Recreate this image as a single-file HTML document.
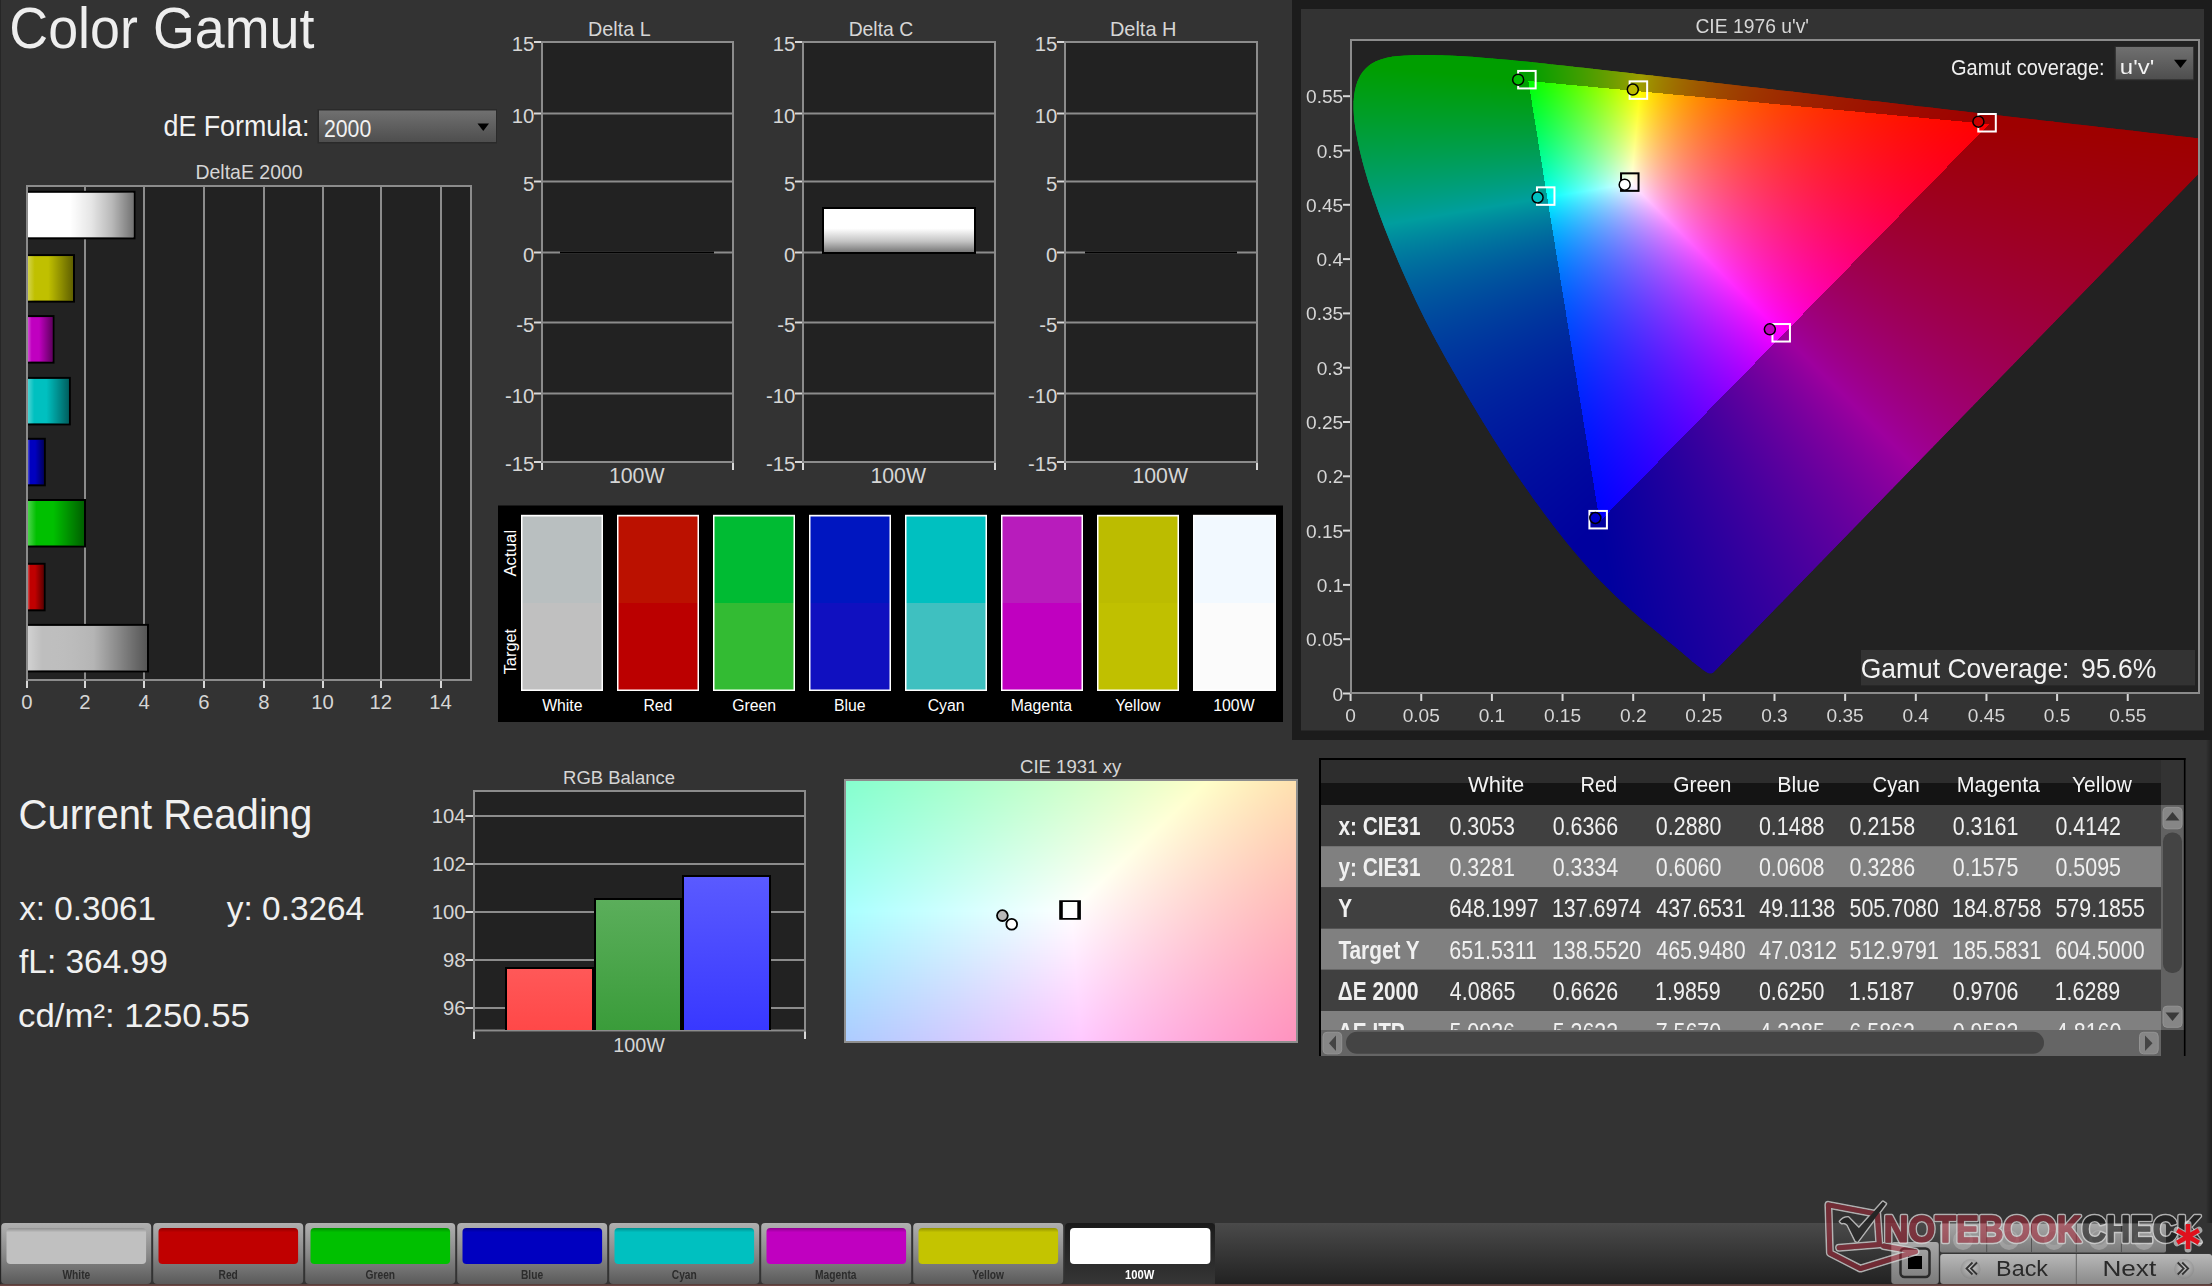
<!DOCTYPE html>
<html><head><meta charset="utf-8"><title>Color Gamut</title>
<style>
html,body{margin:0;padding:0;background:#333333;width:2212px;height:1286px;overflow:hidden}
svg{position:absolute;left:0;top:0}
text{font-family:"Liberation Sans",sans-serif}
canvas{position:absolute}
#cuv{left:1352px;top:41px}
#cxy{left:846px;top:781px}
</style></head><body>
<svg width="2212" height="1286" viewBox="0 0 2212 1286" style="z-index:1">
<defs>
<linearGradient id="gDrop" x1="0" y1="0" x2="0" y2="1"><stop offset="0" stop-color="#707070"/><stop offset="1" stop-color="#4e4e4e"/></linearGradient>
<linearGradient id="gBarW" x1="0" y1="0" x2="1" y2="0"><stop offset="0" stop-color="#000" stop-opacity="0"/><stop offset="0.4" stop-color="#000" stop-opacity="0"/><stop offset="0.6" stop-color="#000" stop-opacity="0.1"/><stop offset="0.8" stop-color="#000" stop-opacity="0.28"/><stop offset="1" stop-color="#000" stop-opacity="0.55"/></linearGradient>
<linearGradient id="gBarC" x1="0" y1="0" x2="1" y2="0"><stop offset="0" stop-color="#fff" stop-opacity="0.3"/><stop offset="0.15" stop-color="#fff" stop-opacity="0"/><stop offset="0.45" stop-color="#000" stop-opacity="0"/><stop offset="1" stop-color="#000" stop-opacity="0.5"/></linearGradient>
<linearGradient id="gBarG" x1="0" y1="0" x2="1" y2="0"><stop offset="0" stop-color="#fff" stop-opacity="0.3"/><stop offset="0.12" stop-color="#fff" stop-opacity="0"/><stop offset="0.55" stop-color="#000" stop-opacity="0.05"/><stop offset="1" stop-color="#000" stop-opacity="0.55"/></linearGradient>
<linearGradient id="gBarV" x1="0" y1="0" x2="0" y2="1"><stop offset="0" stop-color="#ffffff"/><stop offset="0.45" stop-color="#ffffff"/><stop offset="0.75" stop-color="#c4c4c4"/><stop offset="1" stop-color="#787878"/></linearGradient>
<linearGradient id="gRed" x1="0" y1="0" x2="0" y2="1"><stop offset="0" stop-color="#ff5858"/><stop offset="1" stop-color="#ff4848"/></linearGradient>
<linearGradient id="gGreen" x1="0" y1="0" x2="0" y2="1"><stop offset="0" stop-color="#5bae5b"/><stop offset="1" stop-color="#3a9c3a"/></linearGradient>
<linearGradient id="gBlue" x1="0" y1="0" x2="0" y2="1"><stop offset="0" stop-color="#5a5aff"/><stop offset="1" stop-color="#3838ff"/></linearGradient>
<linearGradient id="gBtn" x1="0" y1="0" x2="0" y2="1"><stop offset="0" stop-color="#b0b0b0"/><stop offset="0.5" stop-color="#8a8a8a"/><stop offset="1" stop-color="#5a5a5a"/></linearGradient>
<linearGradient id="gBtnSel" x1="0" y1="0" x2="0" y2="1"><stop offset="0" stop-color="#1a1a1a"/><stop offset="1" stop-color="#363636"/></linearGradient>
<linearGradient id="gSwIn" x1="0" y1="0" x2="0" y2="1"><stop offset="0" stop-color="#000" stop-opacity="0.25"/><stop offset="0.12" stop-color="#000" stop-opacity="0"/><stop offset="1" stop-color="#000" stop-opacity="0"/></linearGradient>
<linearGradient id="gTool" x1="0" y1="0" x2="0" y2="1"><stop offset="0" stop-color="#4a4a4a"/><stop offset="1" stop-color="#222222"/></linearGradient>
<linearGradient id="gBtn2" x1="0" y1="0" x2="0" y2="1"><stop offset="0" stop-color="#a8a8a8"/><stop offset="1" stop-color="#7a7a7a"/></linearGradient>
<linearGradient id="gBtn3" x1="0" y1="0" x2="0" y2="1"><stop offset="0" stop-color="#b8b8b8"/><stop offset="1" stop-color="#8a8a8a"/></linearGradient>
<linearGradient id="gEdge" x1="0" y1="0" x2="1" y2="0"><stop offset="0" stop-color="#000" stop-opacity="0"/><stop offset="1" stop-color="#000" stop-opacity="0.4"/></linearGradient>
<radialGradient id="gCirc" cx="0.5" cy="0.4" r="0.6"><stop offset="0" stop-color="#c8c8c8"/><stop offset="1" stop-color="#8a8a8a"/></radialGradient>
</defs>
<rect x="0" y="0" width="1" height="1286" fill="#262626"/>
<text x="9.31" y="48.00" font-size="56.52" fill="#eeeeee" textLength="305.15" lengthAdjust="spacingAndGlyphs" >Color Gamut</text>
<text x="163.53" y="136.00" font-size="28.99" fill="#f2f2f2" textLength="145.92" lengthAdjust="spacingAndGlyphs" >dE Formula:</text>
<rect x="317.50" y="109.00" width="179.50" height="34.50" fill="#2a2a2a" />
<rect x="319" y="110.5" width="177" height="31.5" fill="url(#gDrop)"/>
<text x="323.94" y="136.60" font-size="23.19" fill="#f2f2f2" textLength="47.30" lengthAdjust="spacingAndGlyphs" >2000</text>
<path d="M477.5,123.5 L489,123.5 L483.25,131 Z" fill="#000"/>
<text x="195.44" y="179.00" font-size="20.29" fill="#d6d6d6" textLength="107.22" lengthAdjust="spacingAndGlyphs" >DeltaE 2000</text>
<rect x="26.00" y="185.00" width="446.00" height="496.00" fill="#222222" />
<rect x="84.00" y="186.00" width="2.00" height="494.00" fill="#8c8c8c" />
<rect x="143.00" y="186.00" width="2.00" height="494.00" fill="#8c8c8c" />
<rect x="203.00" y="186.00" width="2.00" height="494.00" fill="#8c8c8c" />
<rect x="263.00" y="186.00" width="2.00" height="494.00" fill="#8c8c8c" />
<rect x="322.00" y="186.00" width="2.00" height="494.00" fill="#8c8c8c" />
<rect x="380.00" y="186.00" width="2.00" height="494.00" fill="#8c8c8c" />
<rect x="440.00" y="186.00" width="2.00" height="494.00" fill="#8c8c8c" />
<rect x="26.00" y="185.00" width="446.00" height="2.00" fill="#8c8c8c" />
<rect x="26.00" y="185.00" width="2.00" height="496.00" fill="#8c8c8c" />
<rect x="470.00" y="185.00" width="2.00" height="496.00" fill="#8c8c8c" />
<rect x="26.00" y="679.00" width="446.00" height="2.00" fill="#8c8c8c" />
<rect x="26.00" y="681.00" width="2.00" height="7.00" fill="#d8d8d8" />
<text x="21.32" y="708.70" font-size="20.29" fill="#d6d6d6" >0</text>
<rect x="84.00" y="681.00" width="2.00" height="7.00" fill="#d8d8d8" />
<text x="79.37" y="708.70" font-size="20.29" fill="#d6d6d6" >2</text>
<rect x="143.00" y="681.00" width="2.00" height="7.00" fill="#d8d8d8" />
<text x="138.47" y="708.70" font-size="20.29" fill="#d6d6d6" >4</text>
<rect x="203.00" y="681.00" width="2.00" height="7.00" fill="#d8d8d8" />
<text x="198.27" y="708.70" font-size="20.29" fill="#d6d6d6" >6</text>
<rect x="263.00" y="681.00" width="2.00" height="7.00" fill="#d8d8d8" />
<text x="258.32" y="708.70" font-size="20.29" fill="#d6d6d6" >8</text>
<rect x="322.00" y="681.00" width="2.00" height="7.00" fill="#d8d8d8" />
<text x="311.33" y="708.70" font-size="20.29" fill="#d6d6d6" >10</text>
<rect x="380.00" y="681.00" width="2.00" height="7.00" fill="#d8d8d8" />
<text x="369.49" y="708.70" font-size="20.29" fill="#d6d6d6" >12</text>
<rect x="440.00" y="681.00" width="2.00" height="7.00" fill="#d8d8d8" />
<text x="429.28" y="708.70" font-size="20.29" fill="#d6d6d6" >14</text>
<rect x="28.00" y="190.80" width="107.50" height="48.50" fill="#000000" />
<rect x="28.00" y="192.80" width="105.50" height="44.50" fill="#ffffff" />
<rect x="28" y="192.80" width="105.50" height="44.5" fill="url(#gBarW)"/>
<rect x="28.00" y="254.10" width="47.00" height="48.50" fill="#000000" />
<rect x="28.00" y="256.10" width="45.00" height="44.50" fill="#c0c000" />
<rect x="28" y="256.10" width="45.00" height="44.5" fill="url(#gBarC)"/>
<rect x="28.00" y="315.10" width="26.50" height="48.50" fill="#000000" />
<rect x="28.00" y="317.10" width="24.50" height="44.50" fill="#c000c0" />
<rect x="28" y="317.10" width="24.50" height="44.5" fill="url(#gBarC)"/>
<rect x="28.00" y="376.90" width="42.80" height="48.50" fill="#000000" />
<rect x="28.00" y="378.90" width="40.80" height="44.50" fill="#00c0c0" />
<rect x="28" y="378.90" width="40.80" height="44.5" fill="url(#gBarC)"/>
<rect x="28.00" y="437.80" width="17.80" height="48.50" fill="#000000" />
<rect x="28.00" y="439.80" width="15.80" height="44.50" fill="#0000c0" />
<rect x="28" y="439.80" width="15.80" height="44.5" fill="url(#gBarC)"/>
<rect x="28.00" y="499.00" width="58.00" height="48.50" fill="#000000" />
<rect x="28.00" y="501.00" width="56.00" height="44.50" fill="#00c000" />
<rect x="28" y="501.00" width="56.00" height="44.5" fill="url(#gBarC)"/>
<rect x="28.00" y="562.80" width="17.60" height="48.50" fill="#000000" />
<rect x="28.00" y="564.80" width="15.60" height="44.50" fill="#c00000" />
<rect x="28" y="564.80" width="15.60" height="44.5" fill="url(#gBarC)"/>
<rect x="28.00" y="623.90" width="121.00" height="48.50" fill="#000000" />
<rect x="28.00" y="625.90" width="119.00" height="44.50" fill="#bebebe" />
<rect x="28" y="625.90" width="119.00" height="44.5" fill="url(#gBarG)"/>
<rect x="541.00" y="41.00" width="193.00" height="422.00" fill="#222222" />
<rect x="542.00" y="112.50" width="191.00" height="2.00" fill="#8c8c8c" />
<rect x="542.00" y="180.50" width="191.00" height="2.00" fill="#8c8c8c" />
<rect x="542.00" y="251.50" width="191.00" height="2.00" fill="#8c8c8c" />
<rect x="542.00" y="321.50" width="191.00" height="2.00" fill="#8c8c8c" />
<rect x="542.00" y="392.50" width="191.00" height="2.00" fill="#8c8c8c" />
<rect x="541.00" y="41.00" width="193.00" height="2.00" fill="#8c8c8c" />
<rect x="541.00" y="461.00" width="193.00" height="2.00" fill="#8c8c8c" />
<rect x="541.00" y="41.00" width="2.00" height="422.00" fill="#8c8c8c" />
<rect x="732.00" y="41.00" width="2.00" height="422.00" fill="#8c8c8c" />
<rect x="534.00" y="41.00" width="7.00" height="2.00" fill="#d8d8d8" />
<text x="511.79" y="51.00" font-size="20.29" fill="#d6d6d6" >15</text>
<rect x="534.00" y="112.50" width="7.00" height="2.00" fill="#d8d8d8" />
<text x="511.69" y="122.50" font-size="20.29" fill="#d6d6d6" >10</text>
<rect x="534.00" y="180.50" width="7.00" height="2.00" fill="#d8d8d8" />
<text x="523.05" y="190.50" font-size="20.29" fill="#d6d6d6" >5</text>
<rect x="534.00" y="251.50" width="7.00" height="2.00" fill="#d8d8d8" />
<text x="522.95" y="261.50" font-size="20.29" fill="#d6d6d6" >0</text>
<rect x="534.00" y="321.50" width="7.00" height="2.00" fill="#d8d8d8" />
<text x="516.25" y="331.50" font-size="20.29" fill="#d6d6d6" >-5</text>
<rect x="534.00" y="392.50" width="7.00" height="2.00" fill="#d8d8d8" />
<text x="504.89" y="402.50" font-size="20.29" fill="#d6d6d6" >-10</text>
<rect x="534.00" y="461.00" width="7.00" height="2.00" fill="#d8d8d8" />
<text x="504.99" y="471.00" font-size="20.29" fill="#d6d6d6" >-15</text>
<rect x="541.00" y="463.00" width="2.00" height="7.00" fill="#d8d8d8" />
<rect x="732.00" y="463.00" width="2.00" height="7.00" fill="#d8d8d8" />
<text x="588.12" y="35.80" font-size="20.87" fill="#d6d6d6" textLength="62.54" lengthAdjust="spacingAndGlyphs" >Delta L</text>
<text x="608.90" y="483.00" font-size="21.30" fill="#d6d6d6" >100W</text>
<rect x="802.00" y="41.00" width="194.00" height="422.00" fill="#222222" />
<rect x="803.00" y="112.50" width="192.00" height="2.00" fill="#8c8c8c" />
<rect x="803.00" y="180.50" width="192.00" height="2.00" fill="#8c8c8c" />
<rect x="803.00" y="251.50" width="192.00" height="2.00" fill="#8c8c8c" />
<rect x="803.00" y="321.50" width="192.00" height="2.00" fill="#8c8c8c" />
<rect x="803.00" y="392.50" width="192.00" height="2.00" fill="#8c8c8c" />
<rect x="802.00" y="41.00" width="194.00" height="2.00" fill="#8c8c8c" />
<rect x="802.00" y="461.00" width="194.00" height="2.00" fill="#8c8c8c" />
<rect x="802.00" y="41.00" width="2.00" height="422.00" fill="#8c8c8c" />
<rect x="994.00" y="41.00" width="2.00" height="422.00" fill="#8c8c8c" />
<rect x="795.00" y="41.00" width="7.00" height="2.00" fill="#d8d8d8" />
<text x="772.79" y="51.00" font-size="20.29" fill="#d6d6d6" >15</text>
<rect x="795.00" y="112.50" width="7.00" height="2.00" fill="#d8d8d8" />
<text x="772.69" y="122.50" font-size="20.29" fill="#d6d6d6" >10</text>
<rect x="795.00" y="180.50" width="7.00" height="2.00" fill="#d8d8d8" />
<text x="784.05" y="190.50" font-size="20.29" fill="#d6d6d6" >5</text>
<rect x="795.00" y="251.50" width="7.00" height="2.00" fill="#d8d8d8" />
<text x="783.95" y="261.50" font-size="20.29" fill="#d6d6d6" >0</text>
<rect x="795.00" y="321.50" width="7.00" height="2.00" fill="#d8d8d8" />
<text x="777.25" y="331.50" font-size="20.29" fill="#d6d6d6" >-5</text>
<rect x="795.00" y="392.50" width="7.00" height="2.00" fill="#d8d8d8" />
<text x="765.89" y="402.50" font-size="20.29" fill="#d6d6d6" >-10</text>
<rect x="795.00" y="461.00" width="7.00" height="2.00" fill="#d8d8d8" />
<text x="765.99" y="471.00" font-size="20.29" fill="#d6d6d6" >-15</text>
<rect x="802.00" y="463.00" width="2.00" height="7.00" fill="#d8d8d8" />
<rect x="994.00" y="463.00" width="2.00" height="7.00" fill="#d8d8d8" />
<text x="848.65" y="35.80" font-size="20.87" fill="#d6d6d6" textLength="64.51" lengthAdjust="spacingAndGlyphs" >Delta C</text>
<text x="870.40" y="483.00" font-size="21.30" fill="#d6d6d6" >100W</text>
<rect x="1064.00" y="41.00" width="194.00" height="422.00" fill="#222222" />
<rect x="1065.00" y="112.50" width="192.00" height="2.00" fill="#8c8c8c" />
<rect x="1065.00" y="180.50" width="192.00" height="2.00" fill="#8c8c8c" />
<rect x="1065.00" y="251.50" width="192.00" height="2.00" fill="#8c8c8c" />
<rect x="1065.00" y="321.50" width="192.00" height="2.00" fill="#8c8c8c" />
<rect x="1065.00" y="392.50" width="192.00" height="2.00" fill="#8c8c8c" />
<rect x="1064.00" y="41.00" width="194.00" height="2.00" fill="#8c8c8c" />
<rect x="1064.00" y="461.00" width="194.00" height="2.00" fill="#8c8c8c" />
<rect x="1064.00" y="41.00" width="2.00" height="422.00" fill="#8c8c8c" />
<rect x="1256.00" y="41.00" width="2.00" height="422.00" fill="#8c8c8c" />
<rect x="1057.00" y="41.00" width="7.00" height="2.00" fill="#d8d8d8" />
<text x="1034.79" y="51.00" font-size="20.29" fill="#d6d6d6" >15</text>
<rect x="1057.00" y="112.50" width="7.00" height="2.00" fill="#d8d8d8" />
<text x="1034.69" y="122.50" font-size="20.29" fill="#d6d6d6" >10</text>
<rect x="1057.00" y="180.50" width="7.00" height="2.00" fill="#d8d8d8" />
<text x="1046.05" y="190.50" font-size="20.29" fill="#d6d6d6" >5</text>
<rect x="1057.00" y="251.50" width="7.00" height="2.00" fill="#d8d8d8" />
<text x="1045.95" y="261.50" font-size="20.29" fill="#d6d6d6" >0</text>
<rect x="1057.00" y="321.50" width="7.00" height="2.00" fill="#d8d8d8" />
<text x="1039.25" y="331.50" font-size="20.29" fill="#d6d6d6" >-5</text>
<rect x="1057.00" y="392.50" width="7.00" height="2.00" fill="#d8d8d8" />
<text x="1027.89" y="402.50" font-size="20.29" fill="#d6d6d6" >-10</text>
<rect x="1057.00" y="461.00" width="7.00" height="2.00" fill="#d8d8d8" />
<text x="1027.99" y="471.00" font-size="20.29" fill="#d6d6d6" >-15</text>
<rect x="1064.00" y="463.00" width="2.00" height="7.00" fill="#d8d8d8" />
<rect x="1256.00" y="463.00" width="2.00" height="7.00" fill="#d8d8d8" />
<text x="1109.90" y="35.80" font-size="20.87" fill="#d6d6d6" textLength="66.59" lengthAdjust="spacingAndGlyphs" >Delta H</text>
<text x="1132.40" y="483.00" font-size="21.30" fill="#d6d6d6" >100W</text>
<rect x="560.00" y="251.50" width="154.00" height="2.00" fill="#000" />
<rect x="1085.00" y="251.50" width="152.00" height="2.00" fill="#000" />
<rect x="822.00" y="207.00" width="154.00" height="47.00" fill="#000" />
<rect x="824" y="209" width="150" height="43" fill="url(#gBarV)"/>
<rect x="498.00" y="505.50" width="785.00" height="216.50" fill="#000000" />
<rect x="521.00" y="514.80" width="82.00" height="176.20" fill="#ffffff" />
<rect x="522.50" y="516.50" width="79.00" height="86.50" fill="#b9bfc0" />
<rect x="522.50" y="603.00" width="79.00" height="86.50" fill="#c0c0c0" />
<text x="542.14" y="710.70" font-size="15.80" fill="#ffffff" >White</text>
<rect x="617.00" y="514.80" width="82.00" height="176.20" fill="#ffffff" />
<rect x="618.50" y="516.50" width="79.00" height="86.50" fill="#bb1100" />
<rect x="618.50" y="603.00" width="79.00" height="86.50" fill="#bb0000" />
<text x="643.39" y="710.70" font-size="15.80" fill="#ffffff" >Red</text>
<rect x="713.00" y="514.80" width="82.00" height="176.20" fill="#ffffff" />
<rect x="714.50" y="516.50" width="79.00" height="86.50" fill="#00bb33" />
<rect x="714.50" y="603.00" width="79.00" height="86.50" fill="#33bb33" />
<text x="732.16" y="710.70" font-size="15.80" fill="#ffffff" >Green</text>
<rect x="809.00" y="514.80" width="82.00" height="176.20" fill="#ffffff" />
<rect x="810.50" y="516.50" width="79.00" height="86.50" fill="#0016c0" />
<rect x="810.50" y="603.00" width="79.00" height="86.50" fill="#1010c0" />
<text x="833.93" y="710.70" font-size="15.80" fill="#ffffff" >Blue</text>
<rect x="905.00" y="514.80" width="82.00" height="176.20" fill="#ffffff" />
<rect x="906.50" y="516.50" width="79.00" height="86.50" fill="#00c0c0" />
<rect x="906.50" y="603.00" width="79.00" height="86.50" fill="#3fc0c0" />
<text x="927.68" y="710.70" font-size="15.80" fill="#ffffff" >Cyan</text>
<rect x="1001.00" y="514.80" width="82.00" height="176.20" fill="#ffffff" />
<rect x="1002.50" y="516.50" width="79.00" height="86.50" fill="#b81cbc" />
<rect x="1002.50" y="603.00" width="79.00" height="86.50" fill="#c000c0" />
<text x="1010.64" y="710.70" font-size="15.80" fill="#ffffff" >Magenta</text>
<rect x="1097.00" y="514.80" width="82.00" height="176.20" fill="#ffffff" />
<rect x="1098.50" y="516.50" width="79.00" height="86.50" fill="#bcbc00" />
<rect x="1098.50" y="603.00" width="79.00" height="86.50" fill="#c0c000" />
<text x="1115.25" y="710.70" font-size="15.80" fill="#ffffff" >Yellow</text>
<rect x="1193.00" y="514.80" width="83.00" height="176.20" fill="#ffffff" />
<rect x="1194.50" y="516.50" width="80.00" height="86.50" fill="#f2f9ff" />
<rect x="1194.50" y="603.00" width="80.00" height="86.50" fill="#fbfbfb" />
<text x="1213.29" y="710.70" font-size="15.80" fill="#ffffff" >100W</text>
<g transform="translate(515.5,576.6) rotate(-90)"><text x="0.00" y="0.00" font-size="16.67" fill="#ffffff" textLength="46.77" lengthAdjust="spacingAndGlyphs" >Actual</text></g>
<g transform="translate(515.5,674) rotate(-90)"><text x="-0.33" y="0.00" font-size="16.67" fill="#ffffff" textLength="45.48" lengthAdjust="spacingAndGlyphs" >Target</text></g>
<rect x="1292.00" y="0.00" width="920.00" height="740.00" fill="#1c1c1c" />
<rect x="1301.00" y="9.00" width="903.00" height="721.50" fill="#333333" />
<rect x="1350.00" y="39.00" width="850.00" height="655.00" fill="#222222" />
<text x="18.60" y="829.00" font-size="42.03" fill="#f0f0f0" textLength="293.71" lengthAdjust="spacingAndGlyphs" >Current Reading</text>
<text x="19.17" y="920.00" font-size="32.46" fill="#f0f0f0" textLength="136.91" lengthAdjust="spacingAndGlyphs" >x: 0.3061</text>
<text x="226.83" y="920.00" font-size="32.46" fill="#f0f0f0" textLength="137.34" lengthAdjust="spacingAndGlyphs" >y: 0.3264</text>
<text x="19.00" y="973.40" font-size="32.46" fill="#f0f0f0" textLength="148.82" lengthAdjust="spacingAndGlyphs" >fL: 364.99</text>
<text x="18.11" y="1027.00" font-size="32.46" fill="#f0f0f0" textLength="231.70" lengthAdjust="spacingAndGlyphs" >cd/m²: 1250.55</text>
<rect x="473.00" y="790.00" width="333.00" height="241.50" fill="#222222" />
<rect x="474.00" y="815.00" width="331.00" height="2.00" fill="#8c8c8c" />
<rect x="465.50" y="815.00" width="8.50" height="2.00" fill="#d8d8d8" />
<text x="431.63" y="823.00" font-size="20.29" fill="#d6d6d6" >104</text>
<rect x="474.00" y="863.00" width="331.00" height="2.00" fill="#8c8c8c" />
<rect x="465.50" y="863.00" width="8.50" height="2.00" fill="#d8d8d8" />
<text x="432.03" y="871.00" font-size="20.29" fill="#d6d6d6" >102</text>
<rect x="474.00" y="911.00" width="331.00" height="2.00" fill="#8c8c8c" />
<rect x="465.50" y="911.00" width="8.50" height="2.00" fill="#d8d8d8" />
<text x="431.73" y="919.00" font-size="20.29" fill="#d6d6d6" >100</text>
<rect x="474.00" y="959.00" width="331.00" height="2.00" fill="#8c8c8c" />
<rect x="465.50" y="959.00" width="8.50" height="2.00" fill="#d8d8d8" />
<text x="443.09" y="967.00" font-size="20.29" fill="#d6d6d6" >98</text>
<rect x="474.00" y="1007.00" width="331.00" height="2.00" fill="#8c8c8c" />
<rect x="465.50" y="1007.00" width="8.50" height="2.00" fill="#d8d8d8" />
<text x="443.09" y="1015.00" font-size="20.29" fill="#d6d6d6" >96</text>
<rect x="473.00" y="790.00" width="333.00" height="2.00" fill="#8c8c8c" />
<rect x="473.00" y="790.00" width="2.00" height="241.50" fill="#8c8c8c" />
<rect x="804.00" y="790.00" width="2.00" height="241.50" fill="#8c8c8c" />
<rect x="473.00" y="1029.50" width="333.00" height="2.00" fill="#8c8c8c" />
<rect x="473.00" y="1031.50" width="2.00" height="7.50" fill="#d8d8d8" />
<rect x="804.00" y="1031.50" width="2.00" height="7.50" fill="#d8d8d8" />
<rect x="505.00" y="967.00" width="89.00" height="63.00" fill="#000" />
<rect x="507.00" y="969.00" width="85.00" height="61.00" fill="url(#gRed)"/>
<rect x="594.00" y="898.00" width="88.00" height="132.00" fill="#000" />
<rect x="596.00" y="900.00" width="84.00" height="130.00" fill="url(#gGreen)"/>
<rect x="682.00" y="875.00" width="89.00" height="155.00" fill="#000" />
<rect x="684.00" y="877.00" width="85.00" height="153.00" fill="url(#gBlue)"/>
<text x="563.12" y="783.80" font-size="19.28" fill="#d6d6d6" textLength="111.89" lengthAdjust="spacingAndGlyphs" >RGB Balance</text>
<text x="613.32" y="1051.50" font-size="19.57" fill="#d6d6d6" textLength="51.63" lengthAdjust="spacingAndGlyphs" >100W</text>
<text x="1019.97" y="772.90" font-size="18.84" fill="#d6d6d6" textLength="101.27" lengthAdjust="spacingAndGlyphs" >CIE 1931 xy</text>
<rect x="844.00" y="779.00" width="454.00" height="264.00" fill="#8e8e8e" />
<clipPath id="lclip"><rect x="1352" y="41" width="846" height="651"/></clipPath>
<clipPath id="lpath"><path d="M1713.2,672.5L1713.2,672.5L1713.1,672.5L1713.1,672.5L1713.0,672.5L1712.9,672.6L1712.9,672.7L1712.8,672.8L1712.7,672.9L1712.6,672.9L1712.5,672.9L1712.3,672.9L1712.2,672.9L1712.1,673.0L1712.0,673.1L1711.8,673.2L1711.7,673.2L1711.5,673.3L1711.3,673.3L1711.2,673.3L1711.0,673.2L1710.8,673.2L1710.5,673.2L1710.3,673.2L1710.0,673.3L1709.8,673.3L1709.5,673.3L1709.2,673.3L1708.9,673.3L1708.4,673.1L1708.0,672.9L1707.4,672.6L1706.8,672.2L1706.0,671.7L1705.1,671.2L1704.1,670.5L1703.1,669.8L1702.0,669.0L1700.9,668.1L1699.6,667.1L1698.2,666.0L1696.6,664.7L1694.9,663.4L1693.0,661.9L1691.1,660.2L1689.0,658.5L1686.8,656.6L1684.5,654.7L1682.1,652.6L1679.5,650.4L1676.8,648.2L1673.9,645.8L1670.7,643.2L1667.3,640.4L1663.7,637.4L1659.9,634.3L1655.9,631.0L1651.7,627.6L1647.3,624.0L1642.8,620.2L1637.9,616.0L1632.8,611.6L1627.5,606.8L1621.9,601.7L1615.9,596.2L1609.9,590.3L1603.6,584.1L1596.8,577.2L1589.5,569.3L1581.5,560.1L1572.9,550.1L1563.9,539.0L1554.5,527.0L1544.7,514.0L1534.4,499.9L1523.8,485.0L1513.1,469.2L1502.1,452.3L1490.8,434.4L1479.4,415.9L1468.2,397.2L1457.1,378.1L1445.9,358.5L1435.1,338.7L1425.0,319.4L1415.7,300.2L1406.9,281.1L1398.7,262.4L1391.3,244.7L1384.5,227.7L1378.4,211.4L1373.0,196.0L1368.3,181.7L1364.4,168.5L1361.2,156.4L1358.6,145.2L1356.5,134.8L1355.0,125.5L1354.0,117.0L1353.6,109.4L1353.6,102.3L1354.1,95.7L1355.0,89.9L1356.4,84.6L1358.1,79.9L1360.3,75.6L1362.8,71.8L1365.7,68.5L1368.9,65.6L1372.3,63.2L1376.1,61.3L1380.0,59.7L1384.2,58.4L1388.4,57.4L1392.9,56.6L1397.6,56.1L1402.3,55.7L1407.1,55.4L1412.1,55.2L1417.1,55.1L1422.1,55.0L1427.1,55.0L1432.1,55.1L1437.1,55.2L1442.2,55.3L1447.3,55.5L1452.5,55.7L1457.8,56.0L1463.2,56.3L1468.7,56.6L1474.2,57.0L1479.9,57.4L1485.8,57.9L1491.7,58.4L1497.8,58.9L1504.0,59.5L1510.3,60.1L1516.8,60.8L1523.5,61.4L1530.3,62.1L1537.3,62.8L1544.5,63.6L1551.9,64.4L1559.4,65.2L1567.2,66.1L1575.2,66.9L1583.3,67.8L1591.7,68.8L1600.3,69.7L1609.1,70.7L1618.1,71.8L1627.4,72.8L1636.9,73.9L1646.6,75.0L1656.6,76.1L1666.7,77.3L1677.1,78.5L1687.8,79.7L1698.6,81.0L1709.7,82.2L1721.0,83.5L1732.6,84.9L1744.3,86.2L1756.3,87.6L1768.4,89.0L1780.7,90.4L1793.2,91.8L1805.8,93.3L1818.5,94.7L1831.3,96.2L1844.2,97.7L1857.1,99.2L1869.9,100.7L1882.5,102.1L1895.0,103.6L1907.4,105.0L1919.8,106.4L1932.1,107.8L1944.4,109.2L1956.5,110.6L1968.3,112.0L1979.7,113.3L1990.9,114.5L2001.8,115.8L2012.3,117.0L2022.5,118.2L2032.4,119.3L2042.0,120.4L2051.1,121.5L2060.0,122.5L2068.4,123.5L2076.5,124.4L2084.2,125.3L2091.6,126.1L2098.7,126.9L2105.4,127.7L2111.9,128.4L2118.1,129.2L2124.1,129.8L2129.7,130.5L2135.3,131.1L2140.6,131.8L2145.8,132.4L2150.7,132.9L2155.5,133.5L2160.1,134.0L2164.5,134.5L2168.7,135.0L2172.6,135.5L2176.4,135.9L2180.0,136.3L2183.3,136.7L2186.5,137.0L2189.4,137.3L2192.2,137.7L2194.8,138.0L2197.2,138.3L2199.5,138.5L2201.7,138.8L2203.7,139.0L2205.6,139.2L2207.3,139.4L2209.0,139.6L2210.5,139.8L2211.8,139.9L2213.0,140.1L2214.1,140.2L2215.0,140.3L2215.9,140.4L2216.8,140.5L2217.7,140.6L2218.5,140.7L2219.3,140.8L2220.0,140.9L2220.6,141.0L2221.3,141.0L2221.9,141.1L2222.6,141.2L2223.2,141.3L2223.9,141.3L2224.5,141.4L2225.1,141.5L2225.7,141.5L2226.3,141.6L2226.8,141.7L2227.3,141.7L2227.7,141.8L2228.0,141.8L2228.3,141.8L2228.6,141.9L2228.8,141.9L2228.9,141.9L2229.1,141.9L2229.2,141.9L2229.3,142.0L2229.4,142.0L2229.5,142.0Z"/></clipPath>
<g clip-path="url(#lclip)"><g clip-path="url(#lpath)">
<path d="M1352 41h21v21h-21z" fill="#009e00"/>
<path d="M1372 41h21v21h-21z" fill="#009e00"/>
<path d="M1392 41h21v21h-21z" fill="#009e00"/>
<path d="M1412 41h21v21h-21z" fill="#009e00"/>
<path d="M1432 41h21v21h-21z" fill="#009e00"/>
<path d="M1452 41h21v21h-21z" fill="#009e00"/>
<path d="M1472 41h21v21h-21z" fill="#009e00"/>
<path d="M1492 41h21v21h-21z" fill="#009e00"/>
<path d="M1512 41h21v21h-21z" fill="#009e00"/>
<path d="M1532 41h21v21h-21z" fill="#139e00"/>
<path d="M1552 41h21v21h-21z" fill="#2a9e00"/>
<path d="M1572 41h21v21h-21z" fill="#429e00"/>
<path d="M1592 41h21v21h-21z" fill="#5d9e00"/>
<path d="M1612 41h21v21h-21z" fill="#7b9e00"/>
<path d="M1632 41h21v21h-21z" fill="#9b9e00"/>
<path d="M1652 41h21v21h-21z" fill="#9e8300"/>
<path d="M1672 41h21v21h-21z" fill="#9e6c00"/>
<path d="M1692 41h21v21h-21z" fill="#9e5b00"/>
<path d="M1712 41h21v21h-21z" fill="#9e4d00"/>
<path d="M1352 61h21v21h-21z" fill="#009e04"/>
<path d="M1372 61h21v21h-21z" fill="#009e02"/>
<path d="M1392 61h21v21h-21z" fill="#009e01"/>
<path d="M1412 61h21v21h-21z" fill="#009e00"/>
<path d="M1432 61h21v21h-21z" fill="#009e00"/>
<path d="M1452 61h21v21h-21z" fill="#009e00"/>
<path d="M1472 61h21v21h-21z" fill="#009e00"/>
<path d="M1492 61h21v21h-21z" fill="#009e00"/>
<path d="M1512 61h21v21h-21z" fill="#009e00"/>
<path d="M1532 61h21v21h-21z" fill="#109e00"/>
<path d="M1552 61h21v21h-21z" fill="#289e00"/>
<path d="M1572 61h21v21h-21z" fill="#419e00"/>
<path d="M1592 61h21v21h-21z" fill="#5d9e00"/>
<path d="M1612 61h21v21h-21z" fill="#7c9e00"/>
<path d="M1632 61h21v21h-21z" fill="#9e9d00"/>
<path d="M1652 61h21v21h-21z" fill="#9e7f00"/>
<path d="M1672 61h21v21h-21z" fill="#9e6900"/>
<path d="M1692 61h21v21h-21z" fill="#9e5800"/>
<path d="M1712 61h21v21h-21z" fill="#9e4a00"/>
<path d="M1732 61h21v21h-21z" fill="#9e3f00"/>
<path d="M1752 61h21v21h-21z" fill="#9e3600"/>
<path d="M1772 61h21v21h-21z" fill="#9e2e00"/>
<path d="M1792 61h21v21h-21z" fill="#9e2700"/>
<path d="M1812 61h21v21h-21z" fill="#9e2100"/>
<path d="M1832 61h21v21h-21z" fill="#9e1c00"/>
<path d="M1852 61h21v21h-21z" fill="#9e1800"/>
<path d="M1872 61h21v21h-21z" fill="#9e1400"/>
<path d="M1352 81h21v21h-21z" fill="#009e13"/>
<path d="M1372 81h21v21h-21z" fill="#009e12"/>
<path d="M1392 81h21v21h-21z" fill="#009e12"/>
<path d="M1412 81h21v21h-21z" fill="#009e11"/>
<path d="M1432 81h21v21h-21z" fill="#009e0f"/>
<path d="M1452 81h21v21h-21z" fill="#009e0e"/>
<path d="M1472 81h21v21h-21z" fill="#009e0d"/>
<path d="M1492 81h21v21h-21z" fill="#009e0c"/>
<path d="M1512 81h21v21h-21z" fill="#009e0a"/>
<path d="M1532 81h21v21h-21z" fill="#16ff0f"/>
<path d="M1552 81h21v21h-21z" fill="#3dff0c"/>
<path d="M1572 81h21v21h-21z" fill="#68ff09"/>
<path d="M1592 81h21v21h-21z" fill="#97ff06"/>
<path d="M1612 81h21v21h-21z" fill="#cbff02"/>
<path d="M1632 81h21v21h-21z" fill="#9e9a00"/>
<path d="M1652 81h21v21h-21z" fill="#9e7c00"/>
<path d="M1672 81h21v21h-21z" fill="#9e6500"/>
<path d="M1692 81h21v21h-21z" fill="#9e5400"/>
<path d="M1712 81h21v21h-21z" fill="#9e4700"/>
<path d="M1732 81h21v21h-21z" fill="#9e3c00"/>
<path d="M1752 81h21v21h-21z" fill="#9e3300"/>
<path d="M1772 81h21v21h-21z" fill="#9e2b00"/>
<path d="M1792 81h21v21h-21z" fill="#9e2400"/>
<path d="M1812 81h21v21h-21z" fill="#9e1f00"/>
<path d="M1832 81h21v21h-21z" fill="#9e1a00"/>
<path d="M1852 81h21v21h-21z" fill="#9e1500"/>
<path d="M1872 81h21v21h-21z" fill="#9e1200"/>
<path d="M1892 81h21v21h-21z" fill="#9e0e00"/>
<path d="M1912 81h21v21h-21z" fill="#9e0b00"/>
<path d="M1932 81h21v21h-21z" fill="#9e0800"/>
<path d="M1952 81h21v21h-21z" fill="#9e0600"/>
<path d="M1972 81h21v21h-21z" fill="#9e0300"/>
<path d="M1992 81h21v21h-21z" fill="#9e0100"/>
<path d="M2012 81h21v21h-21z" fill="#9e0000"/>
<path d="M2032 81h21v21h-21z" fill="#9e0000"/>
<path d="M2052 81h21v21h-21z" fill="#9e0000"/>
<path d="M1352 101h21v21h-21z" fill="#009e24"/>
<path d="M1372 101h21v21h-21z" fill="#009e23"/>
<path d="M1392 101h21v21h-21z" fill="#009e23"/>
<path d="M1412 101h21v21h-21z" fill="#009e23"/>
<path d="M1432 101h21v21h-21z" fill="#009e22"/>
<path d="M1452 101h21v21h-21z" fill="#009e22"/>
<path d="M1472 101h21v21h-21z" fill="#009e21"/>
<path d="M1492 101h21v21h-21z" fill="#009e21"/>
<path d="M1512 101h21v21h-21z" fill="#009e20"/>
<path d="M1532 101h21v21h-21z" fill="#10fe33"/>
<path d="M1552 101h21v21h-21z" fill="#39ff32"/>
<path d="M1572 101h21v21h-21z" fill="#66fe31"/>
<path d="M1592 101h21v21h-21z" fill="#98ff2f"/>
<path d="M1612 101h21v21h-21z" fill="#ceff2e"/>
<path d="M1632 101h21v21h-21z" fill="#fff32a"/>
<path d="M1652 101h21v21h-21z" fill="#ffc220"/>
<path d="M1672 101h21v21h-21z" fill="#fe9e18"/>
<path d="M1692 101h21v21h-21z" fill="#ff8213"/>
<path d="M1712 101h21v21h-21z" fill="#ff6d0e"/>
<path d="M1732 101h21v21h-21z" fill="#ff5b0b"/>
<path d="M1752 101h21v21h-21z" fill="#ff4d08"/>
<path d="M1772 101h21v21h-21z" fill="#ff4106"/>
<path d="M1792 101h21v21h-21z" fill="#fe3603"/>
<path d="M1812 101h21v21h-21z" fill="#ff2d02"/>
<path d="M1832 101h21v21h-21z" fill="#ff2600"/>
<path d="M1852 101h21v21h-21z" fill="#9e1300"/>
<path d="M1872 101h21v21h-21z" fill="#9e0f00"/>
<path d="M1892 101h21v21h-21z" fill="#9e0c00"/>
<path d="M1912 101h21v21h-21z" fill="#9e0900"/>
<path d="M1932 101h21v21h-21z" fill="#9e0600"/>
<path d="M1952 101h21v21h-21z" fill="#9e0400"/>
<path d="M1972 101h21v21h-21z" fill="#9e0200"/>
<path d="M1992 101h21v21h-21z" fill="#9e0000"/>
<path d="M2012 101h21v21h-21z" fill="#9e0000"/>
<path d="M2032 101h21v21h-21z" fill="#9e0000"/>
<path d="M2052 101h21v21h-21z" fill="#9e0000"/>
<path d="M2072 101h21v21h-21z" fill="#9e0000"/>
<path d="M2092 101h21v21h-21z" fill="#9e0000"/>
<path d="M2112 101h21v21h-21z" fill="#9e0000"/>
<path d="M2132 101h21v21h-21z" fill="#9e0000"/>
<path d="M2152 101h21v21h-21z" fill="#9e0000"/>
<path d="M2172 101h21v21h-21z" fill="#9e0000"/>
<path d="M2192 101h21v21h-21z" fill="#9e0000"/>
<path d="M1352 121h21v21h-21z" fill="#009e35"/>
<path d="M1372 121h21v21h-21z" fill="#009e36"/>
<path d="M1392 121h21v21h-21z" fill="#009e36"/>
<path d="M1412 121h21v21h-21z" fill="#009e36"/>
<path d="M1432 121h21v21h-21z" fill="#009e36"/>
<path d="M1452 121h21v21h-21z" fill="#009e37"/>
<path d="M1472 121h21v21h-21z" fill="#009e37"/>
<path d="M1492 121h21v21h-21z" fill="#009e37"/>
<path d="M1512 121h21v21h-21z" fill="#009e38"/>
<path d="M1532 121h21v21h-21z" fill="#0bff5b"/>
<path d="M1552 121h21v21h-21z" fill="#35ff5b"/>
<path d="M1572 121h21v21h-21z" fill="#64ff5c"/>
<path d="M1592 121h21v21h-21z" fill="#98ff5d"/>
<path d="M1612 121h21v21h-21z" fill="#d1ff5e"/>
<path d="M1632 121h21v21h-21z" fill="#ffed58"/>
<path d="M1652 121h21v21h-21z" fill="#ffbb46"/>
<path d="M1672 121h21v21h-21z" fill="#ff973a"/>
<path d="M1692 121h21v21h-21z" fill="#ff7c30"/>
<path d="M1712 121h21v21h-21z" fill="#ff6728"/>
<path d="M1732 121h21v21h-21z" fill="#ff5522"/>
<path d="M1752 121h21v21h-21z" fill="#ff471d"/>
<path d="M1772 121h21v21h-21z" fill="#ff3b19"/>
<path d="M1792 121h21v21h-21z" fill="#ff3115"/>
<path d="M1812 121h21v21h-21z" fill="#ff2912"/>
<path d="M1832 121h21v21h-21z" fill="#ff2110"/>
<path d="M1852 121h21v21h-21z" fill="#fe1b0d"/>
<path d="M1872 121h21v21h-21z" fill="#ff150b"/>
<path d="M1892 121h21v21h-21z" fill="#ff1009"/>
<path d="M1912 121h21v21h-21z" fill="#ff0b08"/>
<path d="M1932 121h21v21h-21z" fill="#ff0706"/>
<path d="M1952 121h21v21h-21z" fill="#ff0305"/>
<path d="M1972 121h21v21h-21z" fill="#ff0004"/>
<path d="M1992 121h21v21h-21z" fill="#9e0001"/>
<path d="M2012 121h21v21h-21z" fill="#9e0001"/>
<path d="M2032 121h21v21h-21z" fill="#9e0000"/>
<path d="M2052 121h21v21h-21z" fill="#9e0000"/>
<path d="M2072 121h21v21h-21z" fill="#9e0000"/>
<path d="M2092 121h21v21h-21z" fill="#9e0000"/>
<path d="M2112 121h21v21h-21z" fill="#9e0000"/>
<path d="M2132 121h21v21h-21z" fill="#9e0000"/>
<path d="M2152 121h21v21h-21z" fill="#9e0000"/>
<path d="M2172 121h21v21h-21z" fill="#9e0000"/>
<path d="M2192 121h21v21h-21z" fill="#9e0000"/>
<path d="M1352 141h21v21h-21z" fill="#009e48"/>
<path d="M1372 141h21v21h-21z" fill="#009e49"/>
<path d="M1392 141h21v21h-21z" fill="#009e4a"/>
<path d="M1412 141h21v21h-21z" fill="#009e4b"/>
<path d="M1432 141h21v21h-21z" fill="#009e4c"/>
<path d="M1452 141h21v21h-21z" fill="#009e4d"/>
<path d="M1472 141h21v21h-21z" fill="#009e4e"/>
<path d="M1492 141h21v21h-21z" fill="#009e50"/>
<path d="M1512 141h21v21h-21z" fill="#009e51"/>
<path d="M1532 141h21v21h-21z" fill="#04ff86"/>
<path d="M1552 141h21v21h-21z" fill="#31ff89"/>
<path d="M1572 141h21v21h-21z" fill="#62ff8c"/>
<path d="M1592 141h21v21h-21z" fill="#98ff8f"/>
<path d="M1612 141h21v21h-21z" fill="#d5ff93"/>
<path d="M1632 141h21v21h-21z" fill="#ffe689"/>
<path d="M1652 141h21v21h-21z" fill="#feb46f"/>
<path d="M1672 141h21v21h-21z" fill="#ff915c"/>
<path d="M1692 141h21v21h-21z" fill="#fe764e"/>
<path d="M1712 141h21v21h-21z" fill="#ff6143"/>
<path d="M1732 141h21v21h-21z" fill="#ff503a"/>
<path d="M1752 141h21v21h-21z" fill="#fe4233"/>
<path d="M1772 141h21v21h-21z" fill="#ff362d"/>
<path d="M1792 141h21v21h-21z" fill="#ff2d28"/>
<path d="M1812 141h21v21h-21z" fill="#fe2423"/>
<path d="M1832 141h21v21h-21z" fill="#ff1d1f"/>
<path d="M1852 141h21v21h-21z" fill="#ff161c"/>
<path d="M1872 141h21v21h-21z" fill="#ff1119"/>
<path d="M1892 141h21v21h-21z" fill="#ff0c16"/>
<path d="M1912 141h21v21h-21z" fill="#ff0714"/>
<path d="M1932 141h21v21h-21z" fill="#ff0312"/>
<path d="M1952 141h21v21h-21z" fill="#ff0010"/>
<path d="M1972 141h21v21h-21z" fill="#9e0009"/>
<path d="M1992 141h21v21h-21z" fill="#9e0008"/>
<path d="M2012 141h21v21h-21z" fill="#9e0007"/>
<path d="M2032 141h21v21h-21z" fill="#9e0006"/>
<path d="M2052 141h21v21h-21z" fill="#9e0005"/>
<path d="M2072 141h21v21h-21z" fill="#9e0004"/>
<path d="M2092 141h21v21h-21z" fill="#9e0004"/>
<path d="M2112 141h21v21h-21z" fill="#9e0003"/>
<path d="M2132 141h21v21h-21z" fill="#9e0003"/>
<path d="M2152 141h21v21h-21z" fill="#9e0002"/>
<path d="M2172 141h21v21h-21z" fill="#9e0002"/>
<path d="M2192 141h21v21h-21z" fill="#9e0001"/>
<path d="M1352 161h21v21h-21z" fill="#009e5c"/>
<path d="M1372 161h21v21h-21z" fill="#009e5e"/>
<path d="M1392 161h21v21h-21z" fill="#009e5f"/>
<path d="M1412 161h21v21h-21z" fill="#009e61"/>
<path d="M1432 161h21v21h-21z" fill="#009e63"/>
<path d="M1452 161h21v21h-21z" fill="#009e65"/>
<path d="M1472 161h21v21h-21z" fill="#009e68"/>
<path d="M1492 161h21v21h-21z" fill="#009e6a"/>
<path d="M1512 161h21v21h-21z" fill="#009e6d"/>
<path d="M1532 161h21v21h-21z" fill="#009e70"/>
<path d="M1552 161h21v21h-21z" fill="#2cffbb"/>
<path d="M1572 161h21v21h-21z" fill="#5fffc1"/>
<path d="M1592 161h21v21h-21z" fill="#99ffc8"/>
<path d="M1612 161h21v21h-21z" fill="#d9ffd0"/>
<path d="M1632 161h21v21h-21z" fill="#ffdfbe"/>
<path d="M1652 161h21v21h-21z" fill="#ffad9a"/>
<path d="M1672 161h21v21h-21z" fill="#ff8a81"/>
<path d="M1692 161h21v21h-21z" fill="#ff6f6e"/>
<path d="M1712 161h21v21h-21z" fill="#ff5a5f"/>
<path d="M1732 161h21v21h-21z" fill="#ff4a53"/>
<path d="M1752 161h21v21h-21z" fill="#ff3c49"/>
<path d="M1772 161h21v21h-21z" fill="#ff3141"/>
<path d="M1792 161h21v21h-21z" fill="#ff283a"/>
<path d="M1812 161h21v21h-21z" fill="#ff1f35"/>
<path d="M1832 161h21v21h-21z" fill="#ff1830"/>
<path d="M1852 161h21v21h-21z" fill="#ff122b"/>
<path d="M1872 161h21v21h-21z" fill="#ff0d27"/>
<path d="M1892 161h21v21h-21z" fill="#ff0824"/>
<path d="M1912 161h21v21h-21z" fill="#ff0421"/>
<path d="M1932 161h21v21h-21z" fill="#ff001e"/>
<path d="M1952 161h21v21h-21z" fill="#9e0011"/>
<path d="M1972 161h21v21h-21z" fill="#9e000f"/>
<path d="M1992 161h21v21h-21z" fill="#9e000e"/>
<path d="M2012 161h21v21h-21z" fill="#9e000d"/>
<path d="M2032 161h21v21h-21z" fill="#9e000c"/>
<path d="M2052 161h21v21h-21z" fill="#9e000b"/>
<path d="M2072 161h21v21h-21z" fill="#9e000a"/>
<path d="M2092 161h21v21h-21z" fill="#9e0009"/>
<path d="M2112 161h21v21h-21z" fill="#9e0008"/>
<path d="M2132 161h21v21h-21z" fill="#9e0007"/>
<path d="M2152 161h21v21h-21z" fill="#9e0007"/>
<path d="M2172 161h21v21h-21z" fill="#9e0006"/>
<path d="M2192 161h21v21h-21z" fill="#9e0006"/>
<path d="M1352 181h21v21h-21z" fill="#009e72"/>
<path d="M1372 181h21v21h-21z" fill="#009e74"/>
<path d="M1392 181h21v21h-21z" fill="#009e77"/>
<path d="M1412 181h21v21h-21z" fill="#009e79"/>
<path d="M1432 181h21v21h-21z" fill="#009e7d"/>
<path d="M1452 181h21v21h-21z" fill="#009e80"/>
<path d="M1472 181h21v21h-21z" fill="#009e84"/>
<path d="M1492 181h21v21h-21z" fill="#009e88"/>
<path d="M1512 181h21v21h-21z" fill="#009e8c"/>
<path d="M1532 181h21v21h-21z" fill="#009e91"/>
<path d="M1552 181h21v21h-21z" fill="#26fff3"/>
<path d="M1572 181h21v21h-21z" fill="#5cfffc"/>
<path d="M1592 181h21v21h-21z" fill="#94f6fe"/>
<path d="M1612 181h21v21h-21z" fill="#cdebff"/>
<path d="M1632 181h21v21h-21z" fill="#ffd8f5"/>
<path d="M1652 181h21v21h-21z" fill="#ffa6c7"/>
<path d="M1672 181h21v21h-21z" fill="#fe82a7"/>
<path d="M1692 181h21v21h-21z" fill="#ff688e"/>
<path d="M1712 181h21v21h-21z" fill="#ff547b"/>
<path d="M1732 181h21v21h-21z" fill="#fe446d"/>
<path d="M1752 181h21v21h-21z" fill="#ff3760"/>
<path d="M1772 181h21v21h-21z" fill="#ff2c56"/>
<path d="M1792 181h21v21h-21z" fill="#ff224e"/>
<path d="M1812 181h21v21h-21z" fill="#ff1b46"/>
<path d="M1832 181h21v21h-21z" fill="#ff1440"/>
<path d="M1852 181h21v21h-21z" fill="#ff0e3b"/>
<path d="M1872 181h21v21h-21z" fill="#ff0936"/>
<path d="M1892 181h21v21h-21z" fill="#ff0432"/>
<path d="M1912 181h21v21h-21z" fill="#ff002e"/>
<path d="M1932 181h21v21h-21z" fill="#9e001a"/>
<path d="M1952 181h21v21h-21z" fill="#9e0018"/>
<path d="M1972 181h21v21h-21z" fill="#9e0016"/>
<path d="M1992 181h21v21h-21z" fill="#9e0015"/>
<path d="M2012 181h21v21h-21z" fill="#9e0013"/>
<path d="M2032 181h21v21h-21z" fill="#9e0012"/>
<path d="M2052 181h21v21h-21z" fill="#9e0011"/>
<path d="M2072 181h21v21h-21z" fill="#9e000f"/>
<path d="M2092 181h21v21h-21z" fill="#9e000e"/>
<path d="M2112 181h21v21h-21z" fill="#9e000d"/>
<path d="M2132 181h21v21h-21z" fill="#9e000c"/>
<path d="M2152 181h21v21h-21z" fill="#9e000c"/>
<path d="M2172 181h21v21h-21z" fill="#9e000b"/>
<path d="M2192 181h21v21h-21z" fill="#9e000a"/>
<path d="M1352 201h21v21h-21z" fill="#009e88"/>
<path d="M1372 201h21v21h-21z" fill="#009e8c"/>
<path d="M1392 201h21v21h-21z" fill="#009e90"/>
<path d="M1412 201h21v21h-21z" fill="#009e94"/>
<path d="M1432 201h21v21h-21z" fill="#009e98"/>
<path d="M1452 201h21v21h-21z" fill="#009e9d"/>
<path d="M1472 201h21v21h-21z" fill="#00999e"/>
<path d="M1492 201h21v21h-21z" fill="#00949e"/>
<path d="M1512 201h21v21h-21z" fill="#008f9e"/>
<path d="M1532 201h21v21h-21z" fill="#00899e"/>
<path d="M1552 201h21v21h-21z" fill="#1bd5ff"/>
<path d="M1572 201h21v21h-21z" fill="#47cbff"/>
<path d="M1592 201h21v21h-21z" fill="#75c1ff"/>
<path d="M1612 201h21v21h-21z" fill="#a4b7ff"/>
<path d="M1632 201h21v21h-21z" fill="#d4adff"/>
<path d="M1652 201h21v21h-21z" fill="#ff9ef7"/>
<path d="M1672 201h21v21h-21z" fill="#ff7bce"/>
<path d="M1692 201h21v21h-21z" fill="#ff61b0"/>
<path d="M1712 201h21v21h-21z" fill="#ff4d99"/>
<path d="M1732 201h21v21h-21z" fill="#ff3d87"/>
<path d="M1752 201h21v21h-21z" fill="#ff3178"/>
<path d="M1772 201h21v21h-21z" fill="#ff266c"/>
<path d="M1792 201h21v21h-21z" fill="#ff1d62"/>
<path d="M1812 201h21v21h-21z" fill="#ff1659"/>
<path d="M1832 201h21v21h-21z" fill="#ff0f51"/>
<path d="M1852 201h21v21h-21z" fill="#ff094a"/>
<path d="M1872 201h21v21h-21z" fill="#ff0445"/>
<path d="M1892 201h21v21h-21z" fill="#ff003f"/>
<path d="M1912 201h21v21h-21z" fill="#9e0024"/>
<path d="M1932 201h21v21h-21z" fill="#9e0022"/>
<path d="M1952 201h21v21h-21z" fill="#9e001f"/>
<path d="M1972 201h21v21h-21z" fill="#9e001d"/>
<path d="M1992 201h21v21h-21z" fill="#9e001b"/>
<path d="M2012 201h21v21h-21z" fill="#9e001a"/>
<path d="M2032 201h21v21h-21z" fill="#9e0018"/>
<path d="M2052 201h21v21h-21z" fill="#9e0016"/>
<path d="M2072 201h21v21h-21z" fill="#9e0015"/>
<path d="M2092 201h21v21h-21z" fill="#9e0014"/>
<path d="M2112 201h21v21h-21z" fill="#9e0013"/>
<path d="M2132 201h21v21h-21z" fill="#9e0012"/>
<path d="M2152 201h21v21h-21z" fill="#9e0010"/>
<path d="M2172 201h21v21h-21z" fill="#9e000f"/>
<path d="M2192 201h21v21h-21z" fill="#9e000f"/>
<path d="M1352 221h21v21h-21z" fill="#009a9e"/>
<path d="M1372 221h21v21h-21z" fill="#00969e"/>
<path d="M1392 221h21v21h-21z" fill="#00929e"/>
<path d="M1412 221h21v21h-21z" fill="#008d9e"/>
<path d="M1432 221h21v21h-21z" fill="#00899e"/>
<path d="M1452 221h21v21h-21z" fill="#00849e"/>
<path d="M1472 221h21v21h-21z" fill="#007f9e"/>
<path d="M1492 221h21v21h-21z" fill="#007a9e"/>
<path d="M1512 221h21v21h-21z" fill="#00759e"/>
<path d="M1532 221h21v21h-21z" fill="#00709e"/>
<path d="M1552 221h21v21h-21z" fill="#11adff"/>
<path d="M1572 221h21v21h-21z" fill="#37a4fe"/>
<path d="M1592 221h21v21h-21z" fill="#5e9cff"/>
<path d="M1612 221h21v21h-21z" fill="#8692ff"/>
<path d="M1632 221h21v21h-21z" fill="#af89ff"/>
<path d="M1652 221h21v21h-21z" fill="#da7fff"/>
<path d="M1672 221h21v21h-21z" fill="#ff73f8"/>
<path d="M1692 221h21v21h-21z" fill="#ff59d4"/>
<path d="M1712 221h21v21h-21z" fill="#ff46b8"/>
<path d="M1732 221h21v21h-21z" fill="#ff37a2"/>
<path d="M1752 221h21v21h-21z" fill="#ff2a91"/>
<path d="M1772 221h21v21h-21z" fill="#ff2082"/>
<path d="M1792 221h21v21h-21z" fill="#ff1876"/>
<path d="M1812 221h21v21h-21z" fill="#ff116b"/>
<path d="M1832 221h21v21h-21z" fill="#fe0a62"/>
<path d="M1852 221h21v21h-21z" fill="#ff055b"/>
<path d="M1872 221h21v21h-21z" fill="#ff0054"/>
<path d="M1892 221h21v21h-21z" fill="#9e0030"/>
<path d="M1912 221h21v21h-21z" fill="#9e002d"/>
<path d="M1932 221h21v21h-21z" fill="#9e002a"/>
<path d="M1952 221h21v21h-21z" fill="#9e0027"/>
<path d="M1972 221h21v21h-21z" fill="#9e0024"/>
<path d="M1992 221h21v21h-21z" fill="#9e0022"/>
<path d="M2012 221h21v21h-21z" fill="#9e0020"/>
<path d="M2032 221h21v21h-21z" fill="#9e001e"/>
<path d="M2052 221h21v21h-21z" fill="#9e001c"/>
<path d="M2072 221h21v21h-21z" fill="#9e001b"/>
<path d="M2092 221h21v21h-21z" fill="#9e0019"/>
<path d="M2112 221h21v21h-21z" fill="#9e0018"/>
<path d="M2132 221h21v21h-21z" fill="#9e0017"/>
<path d="M2152 221h21v21h-21z" fill="#9e0015"/>
<path d="M2172 221h21v21h-21z" fill="#9e0014"/>
<path d="M2192 221h21v21h-21z" fill="#9e0013"/>
<path d="M1352 241h21v21h-21z" fill="#00849e"/>
<path d="M1372 241h21v21h-21z" fill="#00809e"/>
<path d="M1392 241h21v21h-21z" fill="#007c9e"/>
<path d="M1412 241h21v21h-21z" fill="#00789e"/>
<path d="M1432 241h21v21h-21z" fill="#00749e"/>
<path d="M1452 241h21v21h-21z" fill="#00709e"/>
<path d="M1472 241h21v21h-21z" fill="#006b9e"/>
<path d="M1492 241h21v21h-21z" fill="#00679e"/>
<path d="M1512 241h21v21h-21z" fill="#00629e"/>
<path d="M1532 241h21v21h-21z" fill="#005d9e"/>
<path d="M1552 241h21v21h-21z" fill="#0a8fff"/>
<path d="M1572 241h21v21h-21z" fill="#2b87ff"/>
<path d="M1592 241h21v21h-21z" fill="#4d7fff"/>
<path d="M1612 241h21v21h-21z" fill="#7077ff"/>
<path d="M1632 241h21v21h-21z" fill="#946eff"/>
<path d="M1652 241h21v21h-21z" fill="#b865ff"/>
<path d="M1672 241h21v21h-21z" fill="#de5cff"/>
<path d="M1692 241h21v21h-21z" fill="#ff51f9"/>
<path d="M1712 241h21v21h-21z" fill="#ff3fd8"/>
<path d="M1732 241h21v21h-21z" fill="#ff30bf"/>
<path d="M1752 241h21v21h-21z" fill="#ff24aa"/>
<path d="M1772 241h21v21h-21z" fill="#ff1a99"/>
<path d="M1792 241h21v21h-21z" fill="#ff128b"/>
<path d="M1812 241h21v21h-21z" fill="#ff0b7f"/>
<path d="M1832 241h21v21h-21z" fill="#ff0574"/>
<path d="M1852 241h21v21h-21z" fill="#ff006b"/>
<path d="M1872 241h21v21h-21z" fill="#9e003d"/>
<path d="M1892 241h21v21h-21z" fill="#9e0039"/>
<path d="M1912 241h21v21h-21z" fill="#9e0035"/>
<path d="M1932 241h21v21h-21z" fill="#9e0031"/>
<path d="M1952 241h21v21h-21z" fill="#9e002e"/>
<path d="M1972 241h21v21h-21z" fill="#9e002c"/>
<path d="M1992 241h21v21h-21z" fill="#9e0029"/>
<path d="M2012 241h21v21h-21z" fill="#9e0027"/>
<path d="M2032 241h21v21h-21z" fill="#9e0024"/>
<path d="M2052 241h21v21h-21z" fill="#9e0022"/>
<path d="M2072 241h21v21h-21z" fill="#9e0021"/>
<path d="M2092 241h21v21h-21z" fill="#9e001f"/>
<path d="M2112 241h21v21h-21z" fill="#9e001d"/>
<path d="M2132 241h21v21h-21z" fill="#9e001c"/>
<path d="M2152 241h21v21h-21z" fill="#9e001a"/>
<path d="M2172 241h21v21h-21z" fill="#9e0019"/>
<path d="M1352 261h21v21h-21z" fill="#00739e"/>
<path d="M1372 261h21v21h-21z" fill="#006f9e"/>
<path d="M1392 261h21v21h-21z" fill="#006b9e"/>
<path d="M1412 261h21v21h-21z" fill="#00679e"/>
<path d="M1432 261h21v21h-21z" fill="#00639e"/>
<path d="M1452 261h21v21h-21z" fill="#005f9e"/>
<path d="M1472 261h21v21h-21z" fill="#005b9e"/>
<path d="M1492 261h21v21h-21z" fill="#00579e"/>
<path d="M1512 261h21v21h-21z" fill="#00539e"/>
<path d="M1532 261h21v21h-21z" fill="#004e9e"/>
<path d="M1552 261h21v21h-21z" fill="#0477ff"/>
<path d="M1572 261h21v21h-21z" fill="#2170ff"/>
<path d="M1592 261h21v21h-21z" fill="#4069ff"/>
<path d="M1612 261h21v21h-21z" fill="#5f61ff"/>
<path d="M1632 261h21v21h-21z" fill="#7e59ff"/>
<path d="M1652 261h21v21h-21z" fill="#9e51ff"/>
<path d="M1672 261h21v21h-21z" fill="#bf49ff"/>
<path d="M1692 261h21v21h-21z" fill="#e141ff"/>
<path d="M1712 261h21v21h-21z" fill="#ff37fa"/>
<path d="M1732 261h21v21h-21z" fill="#ff29dc"/>
<path d="M1752 261h21v21h-21z" fill="#ff1ec4"/>
<path d="M1772 261h21v21h-21z" fill="#ff14b0"/>
<path d="M1792 261h21v21h-21z" fill="#ff0da0"/>
<path d="M1812 261h21v21h-21z" fill="#ff0692"/>
<path d="M1832 261h21v21h-21z" fill="#ff0086"/>
<path d="M1852 261h21v21h-21z" fill="#9e004d"/>
<path d="M1872 261h21v21h-21z" fill="#9e0047"/>
<path d="M1892 261h21v21h-21z" fill="#9e0042"/>
<path d="M1912 261h21v21h-21z" fill="#9e003e"/>
<path d="M1932 261h21v21h-21z" fill="#9e003a"/>
<path d="M1952 261h21v21h-21z" fill="#9e0036"/>
<path d="M1972 261h21v21h-21z" fill="#9e0033"/>
<path d="M1992 261h21v21h-21z" fill="#9e0030"/>
<path d="M2012 261h21v21h-21z" fill="#9e002d"/>
<path d="M2032 261h21v21h-21z" fill="#9e002b"/>
<path d="M2052 261h21v21h-21z" fill="#9e0028"/>
<path d="M2072 261h21v21h-21z" fill="#9e0026"/>
<path d="M2092 261h21v21h-21z" fill="#9e0024"/>
<path d="M2112 261h21v21h-21z" fill="#9e0023"/>
<path d="M2132 261h21v21h-21z" fill="#9e0021"/>
<path d="M2152 261h21v21h-21z" fill="#9e001f"/>
<path d="M1372 281h21v21h-21z" fill="#00619e"/>
<path d="M1392 281h21v21h-21z" fill="#005d9e"/>
<path d="M1412 281h21v21h-21z" fill="#00599e"/>
<path d="M1432 281h21v21h-21z" fill="#00569e"/>
<path d="M1452 281h21v21h-21z" fill="#00529e"/>
<path d="M1472 281h21v21h-21z" fill="#004e9e"/>
<path d="M1492 281h21v21h-21z" fill="#004a9e"/>
<path d="M1512 281h21v21h-21z" fill="#00469e"/>
<path d="M1532 281h21v21h-21z" fill="#00429e"/>
<path d="M1552 281h21v21h-21z" fill="#003e9e"/>
<path d="M1572 281h21v21h-21z" fill="#1a5dff"/>
<path d="M1592 281h21v21h-21z" fill="#3557ff"/>
<path d="M1612 281h21v21h-21z" fill="#514fff"/>
<path d="M1632 281h21v21h-21z" fill="#6d48ff"/>
<path d="M1652 281h21v21h-21z" fill="#8a41ff"/>
<path d="M1672 281h21v21h-21z" fill="#a73aff"/>
<path d="M1692 281h21v21h-21z" fill="#c532ff"/>
<path d="M1712 281h21v21h-21z" fill="#e42aff"/>
<path d="M1732 281h21v21h-21z" fill="#ff22fa"/>
<path d="M1752 281h21v21h-21z" fill="#ff17df"/>
<path d="M1772 281h21v21h-21z" fill="#fe0ec9"/>
<path d="M1792 281h21v21h-21z" fill="#ff07b6"/>
<path d="M1812 281h21v21h-21z" fill="#fe01a6"/>
<path d="M1832 281h21v21h-21z" fill="#9e005e"/>
<path d="M1852 281h21v21h-21z" fill="#9e0057"/>
<path d="M1872 281h21v21h-21z" fill="#9e0051"/>
<path d="M1892 281h21v21h-21z" fill="#9e004b"/>
<path d="M1912 281h21v21h-21z" fill="#9e0046"/>
<path d="M1932 281h21v21h-21z" fill="#9e0042"/>
<path d="M1952 281h21v21h-21z" fill="#9e003e"/>
<path d="M1972 281h21v21h-21z" fill="#9e003a"/>
<path d="M1992 281h21v21h-21z" fill="#9e0037"/>
<path d="M2012 281h21v21h-21z" fill="#9e0034"/>
<path d="M2032 281h21v21h-21z" fill="#9e0031"/>
<path d="M2052 281h21v21h-21z" fill="#9e002f"/>
<path d="M2072 281h21v21h-21z" fill="#9e002c"/>
<path d="M2092 281h21v21h-21z" fill="#9e002a"/>
<path d="M2112 281h21v21h-21z" fill="#9e0028"/>
<path d="M2132 281h21v21h-21z" fill="#9e0026"/>
<path d="M1372 301h21v21h-21z" fill="#00559e"/>
<path d="M1392 301h21v21h-21z" fill="#00519e"/>
<path d="M1412 301h21v21h-21z" fill="#004e9e"/>
<path d="M1432 301h21v21h-21z" fill="#004a9e"/>
<path d="M1452 301h21v21h-21z" fill="#00479e"/>
<path d="M1472 301h21v21h-21z" fill="#00439e"/>
<path d="M1492 301h21v21h-21z" fill="#00409e"/>
<path d="M1512 301h21v21h-21z" fill="#003c9e"/>
<path d="M1532 301h21v21h-21z" fill="#00389e"/>
<path d="M1552 301h21v21h-21z" fill="#00349e"/>
<path d="M1572 301h21v21h-21z" fill="#134eff"/>
<path d="M1592 301h21v21h-21z" fill="#2c48ff"/>
<path d="M1612 301h21v21h-21z" fill="#4541ff"/>
<path d="M1632 301h21v21h-21z" fill="#5f3bff"/>
<path d="M1652 301h21v21h-21z" fill="#7934fe"/>
<path d="M1672 301h21v21h-21z" fill="#942dfe"/>
<path d="M1692 301h21v21h-21z" fill="#ae26ff"/>
<path d="M1712 301h21v21h-21z" fill="#ca1fff"/>
<path d="M1732 301h21v21h-21z" fill="#e618ff"/>
<path d="M1752 301h21v21h-21z" fill="#ff10fb"/>
<path d="M1772 301h21v21h-21z" fill="#ff08e2"/>
<path d="M1792 301h21v21h-21z" fill="#ff01cd"/>
<path d="M1812 301h21v21h-21z" fill="#9e0074"/>
<path d="M1832 301h21v21h-21z" fill="#9e006a"/>
<path d="M1852 301h21v21h-21z" fill="#9e0062"/>
<path d="M1872 301h21v21h-21z" fill="#9e005b"/>
<path d="M1892 301h21v21h-21z" fill="#9e0055"/>
<path d="M1912 301h21v21h-21z" fill="#9e004f"/>
<path d="M1932 301h21v21h-21z" fill="#9e004a"/>
<path d="M1952 301h21v21h-21z" fill="#9e0046"/>
<path d="M1972 301h21v21h-21z" fill="#9e0042"/>
<path d="M1992 301h21v21h-21z" fill="#9e003e"/>
<path d="M2012 301h21v21h-21z" fill="#9e003b"/>
<path d="M2032 301h21v21h-21z" fill="#9e0038"/>
<path d="M2052 301h21v21h-21z" fill="#9e0035"/>
<path d="M2072 301h21v21h-21z" fill="#9e0032"/>
<path d="M2092 301h21v21h-21z" fill="#9e0030"/>
<path d="M2112 301h21v21h-21z" fill="#9e002e"/>
<path d="M1392 321h21v21h-21z" fill="#00479e"/>
<path d="M1412 321h21v21h-21z" fill="#00449e"/>
<path d="M1432 321h21v21h-21z" fill="#00419e"/>
<path d="M1452 321h21v21h-21z" fill="#003e9e"/>
<path d="M1472 321h21v21h-21z" fill="#003a9e"/>
<path d="M1492 321h21v21h-21z" fill="#00379e"/>
<path d="M1512 321h21v21h-21z" fill="#00339e"/>
<path d="M1532 321h21v21h-21z" fill="#00309e"/>
<path d="M1552 321h21v21h-21z" fill="#002c9e"/>
<path d="M1572 321h21v21h-21z" fill="#0e41ff"/>
<path d="M1592 321h21v21h-21z" fill="#253bff"/>
<path d="M1612 321h21v21h-21z" fill="#3c35ff"/>
<path d="M1632 321h21v21h-21z" fill="#532fff"/>
<path d="M1652 321h21v21h-21z" fill="#6b29ff"/>
<path d="M1672 321h21v21h-21z" fill="#8323ff"/>
<path d="M1692 321h21v21h-21z" fill="#9c1cff"/>
<path d="M1712 321h21v21h-21z" fill="#b515ff"/>
<path d="M1732 321h21v21h-21z" fill="#ce0fff"/>
<path d="M1752 321h21v21h-21z" fill="#e808ff"/>
<path d="M1772 321h21v21h-21z" fill="#ff01fb"/>
<path d="M1792 321h21v21h-21z" fill="#9e008d"/>
<path d="M1812 321h21v21h-21z" fill="#9e0081"/>
<path d="M1832 321h21v21h-21z" fill="#9e0076"/>
<path d="M1852 321h21v21h-21z" fill="#9e006d"/>
<path d="M1872 321h21v21h-21z" fill="#9e0065"/>
<path d="M1892 321h21v21h-21z" fill="#9e005e"/>
<path d="M1912 321h21v21h-21z" fill="#9e0058"/>
<path d="M1932 321h21v21h-21z" fill="#9e0053"/>
<path d="M1952 321h21v21h-21z" fill="#9e004e"/>
<path d="M1972 321h21v21h-21z" fill="#9e0049"/>
<path d="M1992 321h21v21h-21z" fill="#9e0045"/>
<path d="M2012 321h21v21h-21z" fill="#9e0042"/>
<path d="M2032 321h21v21h-21z" fill="#9e003e"/>
<path d="M2052 321h21v21h-21z" fill="#9e003b"/>
<path d="M2072 321h21v21h-21z" fill="#9e0038"/>
<path d="M2092 321h21v21h-21z" fill="#9e0036"/>
<path d="M1392 341h21v21h-21z" fill="#003f9e"/>
<path d="M1412 341h21v21h-21z" fill="#003c9e"/>
<path d="M1432 341h21v21h-21z" fill="#00399e"/>
<path d="M1452 341h21v21h-21z" fill="#00369e"/>
<path d="M1472 341h21v21h-21z" fill="#00329e"/>
<path d="M1492 341h21v21h-21z" fill="#002f9e"/>
<path d="M1512 341h21v21h-21z" fill="#002c9e"/>
<path d="M1532 341h21v21h-21z" fill="#00299e"/>
<path d="M1552 341h21v21h-21z" fill="#00259e"/>
<path d="M1572 341h21v21h-21z" fill="#0a37ff"/>
<path d="M1592 341h21v21h-21z" fill="#1f31ff"/>
<path d="M1612 341h21v21h-21z" fill="#342bff"/>
<path d="M1632 341h21v21h-21z" fill="#4926ff"/>
<path d="M1652 341h21v21h-21z" fill="#5f20ff"/>
<path d="M1672 341h21v21h-21z" fill="#751aff"/>
<path d="M1692 341h21v21h-21z" fill="#8c14ff"/>
<path d="M1712 341h21v21h-21z" fill="#a30eff"/>
<path d="M1732 341h21v21h-21z" fill="#ba07ff"/>
<path d="M1752 341h21v21h-21z" fill="#d101ff"/>
<path d="M1772 341h21v21h-21z" fill="#90009e"/>
<path d="M1792 341h21v21h-21z" fill="#9e009c"/>
<path d="M1812 341h21v21h-21z" fill="#9e008e"/>
<path d="M1832 341h21v21h-21z" fill="#9e0083"/>
<path d="M1852 341h21v21h-21z" fill="#9e0079"/>
<path d="M1872 341h21v21h-21z" fill="#9e0070"/>
<path d="M1892 341h21v21h-21z" fill="#9e0068"/>
<path d="M1912 341h21v21h-21z" fill="#9e0061"/>
<path d="M1932 341h21v21h-21z" fill="#9e005b"/>
<path d="M1952 341h21v21h-21z" fill="#9e0056"/>
<path d="M1972 341h21v21h-21z" fill="#9e0051"/>
<path d="M1992 341h21v21h-21z" fill="#9e004d"/>
<path d="M2012 341h21v21h-21z" fill="#9e0049"/>
<path d="M2032 341h21v21h-21z" fill="#9e0045"/>
<path d="M2052 341h21v21h-21z" fill="#9e0042"/>
<path d="M2072 341h21v21h-21z" fill="#9e003e"/>
<path d="M1412 361h21v21h-21z" fill="#00359e"/>
<path d="M1432 361h21v21h-21z" fill="#00329e"/>
<path d="M1452 361h21v21h-21z" fill="#002f9e"/>
<path d="M1472 361h21v21h-21z" fill="#002c9e"/>
<path d="M1492 361h21v21h-21z" fill="#00299e"/>
<path d="M1512 361h21v21h-21z" fill="#00259e"/>
<path d="M1532 361h21v21h-21z" fill="#00229e"/>
<path d="M1552 361h21v21h-21z" fill="#001f9e"/>
<path d="M1572 361h21v21h-21z" fill="#062dff"/>
<path d="M1592 361h21v21h-21z" fill="#1928ff"/>
<path d="M1612 361h21v21h-21z" fill="#2d23ff"/>
<path d="M1632 361h21v21h-21z" fill="#411dff"/>
<path d="M1652 361h21v21h-21z" fill="#5518ff"/>
<path d="M1672 361h21v21h-21z" fill="#6a12ff"/>
<path d="M1692 361h21v21h-21z" fill="#7e0dff"/>
<path d="M1712 361h21v21h-21z" fill="#9307ff"/>
<path d="M1732 361h21v21h-21z" fill="#a901ff"/>
<path d="M1752 361h21v21h-21z" fill="#76009e"/>
<path d="M1772 361h21v21h-21z" fill="#83009e"/>
<path d="M1792 361h21v21h-21z" fill="#91009e"/>
<path d="M1812 361h21v21h-21z" fill="#9e009c"/>
<path d="M1832 361h21v21h-21z" fill="#9e008f"/>
<path d="M1852 361h21v21h-21z" fill="#9e0084"/>
<path d="M1872 361h21v21h-21z" fill="#9e007b"/>
<path d="M1892 361h21v21h-21z" fill="#9e0072"/>
<path d="M1912 361h21v21h-21z" fill="#9e006b"/>
<path d="M1932 361h21v21h-21z" fill="#9e0064"/>
<path d="M1952 361h21v21h-21z" fill="#9e005e"/>
<path d="M1972 361h21v21h-21z" fill="#9e0059"/>
<path d="M1992 361h21v21h-21z" fill="#9e0054"/>
<path d="M2012 361h21v21h-21z" fill="#9e0050"/>
<path d="M2032 361h21v21h-21z" fill="#9e004c"/>
<path d="M2052 361h21v21h-21z" fill="#9e0048"/>
<path d="M1412 381h21v21h-21z" fill="#002e9e"/>
<path d="M1432 381h21v21h-21z" fill="#002c9e"/>
<path d="M1452 381h21v21h-21z" fill="#00299e"/>
<path d="M1472 381h21v21h-21z" fill="#00269e"/>
<path d="M1492 381h21v21h-21z" fill="#00239e"/>
<path d="M1512 381h21v21h-21z" fill="#00209e"/>
<path d="M1532 381h21v21h-21z" fill="#001d9e"/>
<path d="M1552 381h21v21h-21z" fill="#001a9e"/>
<path d="M1572 381h21v21h-21z" fill="#0325ff"/>
<path d="M1592 381h21v21h-21z" fill="#1520ff"/>
<path d="M1612 381h21v21h-21z" fill="#271bff"/>
<path d="M1632 381h21v21h-21z" fill="#3a16ff"/>
<path d="M1652 381h21v21h-21z" fill="#4c11ff"/>
<path d="M1672 381h21v21h-21z" fill="#5f0cff"/>
<path d="M1692 381h21v21h-21z" fill="#7306ff"/>
<path d="M1712 381h21v21h-21z" fill="#8601ff"/>
<path d="M1732 381h21v21h-21z" fill="#5f009e"/>
<path d="M1752 381h21v21h-21z" fill="#6c009e"/>
<path d="M1772 381h21v21h-21z" fill="#78009e"/>
<path d="M1792 381h21v21h-21z" fill="#85009e"/>
<path d="M1812 381h21v21h-21z" fill="#92009e"/>
<path d="M1832 381h21v21h-21z" fill="#9e009c"/>
<path d="M1852 381h21v21h-21z" fill="#9e0090"/>
<path d="M1872 381h21v21h-21z" fill="#9e0086"/>
<path d="M1892 381h21v21h-21z" fill="#9e007d"/>
<path d="M1912 381h21v21h-21z" fill="#9e0074"/>
<path d="M1932 381h21v21h-21z" fill="#9e006d"/>
<path d="M1952 381h21v21h-21z" fill="#9e0067"/>
<path d="M1972 381h21v21h-21z" fill="#9e0061"/>
<path d="M1992 381h21v21h-21z" fill="#9e005c"/>
<path d="M2012 381h21v21h-21z" fill="#9e0057"/>
<path d="M2032 381h21v21h-21z" fill="#9e0053"/>
<path d="M1432 401h21v21h-21z" fill="#00269e"/>
<path d="M1452 401h21v21h-21z" fill="#00239e"/>
<path d="M1472 401h21v21h-21z" fill="#00219e"/>
<path d="M1492 401h21v21h-21z" fill="#001e9e"/>
<path d="M1512 401h21v21h-21z" fill="#001b9e"/>
<path d="M1532 401h21v21h-21z" fill="#00189e"/>
<path d="M1552 401h21v21h-21z" fill="#00159e"/>
<path d="M1572 401h21v21h-21z" fill="#001eff"/>
<path d="M1592 401h21v21h-21z" fill="#1119ff"/>
<path d="M1612 401h21v21h-21z" fill="#2215ff"/>
<path d="M1632 401h21v21h-21z" fill="#3310ff"/>
<path d="M1652 401h21v21h-21z" fill="#450bff"/>
<path d="M1672 401h21v21h-21z" fill="#5706ff"/>
<path d="M1692 401h21v21h-21z" fill="#6901ff"/>
<path d="M1712 401h21v21h-21z" fill="#4c009e"/>
<path d="M1732 401h21v21h-21z" fill="#57009e"/>
<path d="M1752 401h21v21h-21z" fill="#63009e"/>
<path d="M1772 401h21v21h-21z" fill="#6f009e"/>
<path d="M1792 401h21v21h-21z" fill="#7a009e"/>
<path d="M1812 401h21v21h-21z" fill="#86009e"/>
<path d="M1832 401h21v21h-21z" fill="#93009e"/>
<path d="M1852 401h21v21h-21z" fill="#9e009c"/>
<path d="M1872 401h21v21h-21z" fill="#9e0091"/>
<path d="M1892 401h21v21h-21z" fill="#9e0087"/>
<path d="M1912 401h21v21h-21z" fill="#9e007e"/>
<path d="M1932 401h21v21h-21z" fill="#9e0076"/>
<path d="M1952 401h21v21h-21z" fill="#9e006f"/>
<path d="M1972 401h21v21h-21z" fill="#9e0069"/>
<path d="M1992 401h21v21h-21z" fill="#9e0063"/>
<path d="M2012 401h21v21h-21z" fill="#9e005e"/>
<path d="M1432 421h21v21h-21z" fill="#00219e"/>
<path d="M1452 421h21v21h-21z" fill="#001f9e"/>
<path d="M1472 421h21v21h-21z" fill="#001c9e"/>
<path d="M1492 421h21v21h-21z" fill="#00199e"/>
<path d="M1512 421h21v21h-21z" fill="#00179e"/>
<path d="M1532 421h21v21h-21z" fill="#00149e"/>
<path d="M1552 421h21v21h-21z" fill="#00119e"/>
<path d="M1572 421h21v21h-21z" fill="#000f9e"/>
<path d="M1592 421h21v21h-21z" fill="#0d13fe"/>
<path d="M1612 421h21v21h-21z" fill="#1d0fff"/>
<path d="M1632 421h21v21h-21z" fill="#2e0aff"/>
<path d="M1652 421h21v21h-21z" fill="#3e06ff"/>
<path d="M1672 421h21v21h-21z" fill="#4f01fe"/>
<path d="M1692 421h21v21h-21z" fill="#3b009e"/>
<path d="M1712 421h21v21h-21z" fill="#46009e"/>
<path d="M1732 421h21v21h-21z" fill="#50009e"/>
<path d="M1752 421h21v21h-21z" fill="#5b009e"/>
<path d="M1772 421h21v21h-21z" fill="#66009e"/>
<path d="M1792 421h21v21h-21z" fill="#71009e"/>
<path d="M1812 421h21v21h-21z" fill="#7c009e"/>
<path d="M1832 421h21v21h-21z" fill="#88009e"/>
<path d="M1852 421h21v21h-21z" fill="#93009e"/>
<path d="M1872 421h21v21h-21z" fill="#9e009c"/>
<path d="M1892 421h21v21h-21z" fill="#9e0092"/>
<path d="M1912 421h21v21h-21z" fill="#9e0088"/>
<path d="M1932 421h21v21h-21z" fill="#9e0080"/>
<path d="M1952 421h21v21h-21z" fill="#9e0078"/>
<path d="M1972 421h21v21h-21z" fill="#9e0071"/>
<path d="M1992 421h21v21h-21z" fill="#9e006b"/>
<path d="M1452 441h21v21h-21z" fill="#001a9e"/>
<path d="M1472 441h21v21h-21z" fill="#00189e"/>
<path d="M1492 441h21v21h-21z" fill="#00159e"/>
<path d="M1512 441h21v21h-21z" fill="#00139e"/>
<path d="M1532 441h21v21h-21z" fill="#00109e"/>
<path d="M1552 441h21v21h-21z" fill="#000e9e"/>
<path d="M1572 441h21v21h-21z" fill="#000b9e"/>
<path d="M1592 441h21v21h-21z" fill="#0a0eff"/>
<path d="M1612 441h21v21h-21z" fill="#190aff"/>
<path d="M1632 441h21v21h-21z" fill="#2905ff"/>
<path d="M1652 441h21v21h-21z" fill="#3801ff"/>
<path d="M1672 441h21v21h-21z" fill="#2c009e"/>
<path d="M1692 441h21v21h-21z" fill="#36009e"/>
<path d="M1712 441h21v21h-21z" fill="#40009e"/>
<path d="M1732 441h21v21h-21z" fill="#4a009e"/>
<path d="M1752 441h21v21h-21z" fill="#54009e"/>
<path d="M1772 441h21v21h-21z" fill="#5f009e"/>
<path d="M1792 441h21v21h-21z" fill="#69009e"/>
<path d="M1812 441h21v21h-21z" fill="#74009e"/>
<path d="M1832 441h21v21h-21z" fill="#7e009e"/>
<path d="M1852 441h21v21h-21z" fill="#89009e"/>
<path d="M1872 441h21v21h-21z" fill="#94009e"/>
<path d="M1892 441h21v21h-21z" fill="#9e009c"/>
<path d="M1912 441h21v21h-21z" fill="#9e0092"/>
<path d="M1932 441h21v21h-21z" fill="#9e0089"/>
<path d="M1952 441h21v21h-21z" fill="#9e0081"/>
<path d="M1972 441h21v21h-21z" fill="#9e007a"/>
<path d="M1472 461h21v21h-21z" fill="#00149e"/>
<path d="M1492 461h21v21h-21z" fill="#00129e"/>
<path d="M1512 461h21v21h-21z" fill="#000f9e"/>
<path d="M1532 461h21v21h-21z" fill="#000d9e"/>
<path d="M1552 461h21v21h-21z" fill="#000b9e"/>
<path d="M1572 461h21v21h-21z" fill="#00089e"/>
<path d="M1592 461h21v21h-21z" fill="#0709ff"/>
<path d="M1612 461h21v21h-21z" fill="#1505ff"/>
<path d="M1632 461h21v21h-21z" fill="#2401ff"/>
<path d="M1652 461h21v21h-21z" fill="#1f009e"/>
<path d="M1672 461h21v21h-21z" fill="#28009e"/>
<path d="M1692 461h21v21h-21z" fill="#32009e"/>
<path d="M1712 461h21v21h-21z" fill="#3b009e"/>
<path d="M1732 461h21v21h-21z" fill="#45009e"/>
<path d="M1752 461h21v21h-21z" fill="#4e009e"/>
<path d="M1772 461h21v21h-21z" fill="#58009e"/>
<path d="M1792 461h21v21h-21z" fill="#62009e"/>
<path d="M1812 461h21v21h-21z" fill="#6c009e"/>
<path d="M1832 461h21v21h-21z" fill="#76009e"/>
<path d="M1852 461h21v21h-21z" fill="#80009e"/>
<path d="M1872 461h21v21h-21z" fill="#8a009e"/>
<path d="M1892 461h21v21h-21z" fill="#94009e"/>
<path d="M1912 461h21v21h-21z" fill="#9e009d"/>
<path d="M1932 461h21v21h-21z" fill="#9e0093"/>
<path d="M1952 461h21v21h-21z" fill="#9e008a"/>
<path d="M1472 481h21v21h-21z" fill="#00119e"/>
<path d="M1492 481h21v21h-21z" fill="#000f9e"/>
<path d="M1512 481h21v21h-21z" fill="#000c9e"/>
<path d="M1532 481h21v21h-21z" fill="#000a9e"/>
<path d="M1552 481h21v21h-21z" fill="#00089e"/>
<path d="M1572 481h21v21h-21z" fill="#00059e"/>
<path d="M1592 481h21v21h-21z" fill="#0405ff"/>
<path d="M1612 481h21v21h-21z" fill="#1201ff"/>
<path d="M1632 481h21v21h-21z" fill="#14009e"/>
<path d="M1652 481h21v21h-21z" fill="#1c009e"/>
<path d="M1672 481h21v21h-21z" fill="#25009e"/>
<path d="M1692 481h21v21h-21z" fill="#2e009e"/>
<path d="M1712 481h21v21h-21z" fill="#37009e"/>
<path d="M1732 481h21v21h-21z" fill="#40009e"/>
<path d="M1752 481h21v21h-21z" fill="#49009e"/>
<path d="M1772 481h21v21h-21z" fill="#52009e"/>
<path d="M1792 481h21v21h-21z" fill="#5b009e"/>
<path d="M1812 481h21v21h-21z" fill="#65009e"/>
<path d="M1832 481h21v21h-21z" fill="#6e009e"/>
<path d="M1852 481h21v21h-21z" fill="#77009e"/>
<path d="M1872 481h21v21h-21z" fill="#81009e"/>
<path d="M1892 481h21v21h-21z" fill="#8b009e"/>
<path d="M1912 481h21v21h-21z" fill="#95009e"/>
<path d="M1932 481h21v21h-21z" fill="#9e009d"/>
<path d="M1492 501h21v21h-21z" fill="#000c9e"/>
<path d="M1512 501h21v21h-21z" fill="#000a9e"/>
<path d="M1532 501h21v21h-21z" fill="#00079e"/>
<path d="M1552 501h21v21h-21z" fill="#00059e"/>
<path d="M1572 501h21v21h-21z" fill="#00039e"/>
<path d="M1592 501h21v21h-21z" fill="#0201ff"/>
<path d="M1612 501h21v21h-21z" fill="#09009e"/>
<path d="M1632 501h21v21h-21z" fill="#11009e"/>
<path d="M1652 501h21v21h-21z" fill="#1a009e"/>
<path d="M1672 501h21v21h-21z" fill="#22009e"/>
<path d="M1692 501h21v21h-21z" fill="#2a009e"/>
<path d="M1712 501h21v21h-21z" fill="#33009e"/>
<path d="M1732 501h21v21h-21z" fill="#3b009e"/>
<path d="M1752 501h21v21h-21z" fill="#44009e"/>
<path d="M1772 501h21v21h-21z" fill="#4d009e"/>
<path d="M1792 501h21v21h-21z" fill="#55009e"/>
<path d="M1812 501h21v21h-21z" fill="#5e009e"/>
<path d="M1832 501h21v21h-21z" fill="#67009e"/>
<path d="M1852 501h21v21h-21z" fill="#70009e"/>
<path d="M1872 501h21v21h-21z" fill="#79009e"/>
<path d="M1892 501h21v21h-21z" fill="#82009e"/>
<path d="M1912 501h21v21h-21z" fill="#8c009e"/>
<path d="M1512 521h21v21h-21z" fill="#00079e"/>
<path d="M1532 521h21v21h-21z" fill="#00059e"/>
<path d="M1552 521h21v21h-21z" fill="#00039e"/>
<path d="M1572 521h21v21h-21z" fill="#00009e"/>
<path d="M1592 521h21v21h-21z" fill="#00009e"/>
<path d="M1612 521h21v21h-21z" fill="#08009e"/>
<path d="M1632 521h21v21h-21z" fill="#0f009e"/>
<path d="M1652 521h21v21h-21z" fill="#17009e"/>
<path d="M1672 521h21v21h-21z" fill="#1f009e"/>
<path d="M1692 521h21v21h-21z" fill="#27009e"/>
<path d="M1712 521h21v21h-21z" fill="#2f009e"/>
<path d="M1732 521h21v21h-21z" fill="#37009e"/>
<path d="M1752 521h21v21h-21z" fill="#3f009e"/>
<path d="M1772 521h21v21h-21z" fill="#48009e"/>
<path d="M1792 521h21v21h-21z" fill="#50009e"/>
<path d="M1812 521h21v21h-21z" fill="#58009e"/>
<path d="M1832 521h21v21h-21z" fill="#61009e"/>
<path d="M1852 521h21v21h-21z" fill="#69009e"/>
<path d="M1872 521h21v21h-21z" fill="#72009e"/>
<path d="M1892 521h21v21h-21z" fill="#7b009e"/>
<path d="M1512 541h21v21h-21z" fill="#00059e"/>
<path d="M1532 541h21v21h-21z" fill="#00039e"/>
<path d="M1552 541h21v21h-21z" fill="#00009e"/>
<path d="M1572 541h21v21h-21z" fill="#00009e"/>
<path d="M1592 541h21v21h-21z" fill="#00009e"/>
<path d="M1612 541h21v21h-21z" fill="#06009e"/>
<path d="M1632 541h21v21h-21z" fill="#0d009e"/>
<path d="M1652 541h21v21h-21z" fill="#15009e"/>
<path d="M1672 541h21v21h-21z" fill="#1c009e"/>
<path d="M1692 541h21v21h-21z" fill="#24009e"/>
<path d="M1712 541h21v21h-21z" fill="#2c009e"/>
<path d="M1732 541h21v21h-21z" fill="#33009e"/>
<path d="M1752 541h21v21h-21z" fill="#3b009e"/>
<path d="M1772 541h21v21h-21z" fill="#43009e"/>
<path d="M1792 541h21v21h-21z" fill="#4b009e"/>
<path d="M1812 541h21v21h-21z" fill="#53009e"/>
<path d="M1832 541h21v21h-21z" fill="#5b009e"/>
<path d="M1852 541h21v21h-21z" fill="#63009e"/>
<path d="M1872 541h21v21h-21z" fill="#6c009e"/>
<path d="M1532 561h21v21h-21z" fill="#00009e"/>
<path d="M1552 561h21v21h-21z" fill="#00009e"/>
<path d="M1572 561h21v21h-21z" fill="#00009e"/>
<path d="M1592 561h21v21h-21z" fill="#00009e"/>
<path d="M1612 561h21v21h-21z" fill="#05009e"/>
<path d="M1632 561h21v21h-21z" fill="#0c009e"/>
<path d="M1652 561h21v21h-21z" fill="#13009e"/>
<path d="M1672 561h21v21h-21z" fill="#1a009e"/>
<path d="M1692 561h21v21h-21z" fill="#21009e"/>
<path d="M1712 561h21v21h-21z" fill="#29009e"/>
<path d="M1732 561h21v21h-21z" fill="#30009e"/>
<path d="M1752 561h21v21h-21z" fill="#38009e"/>
<path d="M1772 561h21v21h-21z" fill="#3f009e"/>
<path d="M1792 561h21v21h-21z" fill="#47009e"/>
<path d="M1812 561h21v21h-21z" fill="#4e009e"/>
<path d="M1832 561h21v21h-21z" fill="#56009e"/>
<path d="M1852 561h21v21h-21z" fill="#5e009e"/>
<path d="M1552 581h21v21h-21z" fill="#00009e"/>
<path d="M1572 581h21v21h-21z" fill="#00009e"/>
<path d="M1592 581h21v21h-21z" fill="#00009e"/>
<path d="M1612 581h21v21h-21z" fill="#03009e"/>
<path d="M1632 581h21v21h-21z" fill="#0a009e"/>
<path d="M1652 581h21v21h-21z" fill="#11009e"/>
<path d="M1672 581h21v21h-21z" fill="#18009e"/>
<path d="M1692 581h21v21h-21z" fill="#1f009e"/>
<path d="M1712 581h21v21h-21z" fill="#26009e"/>
<path d="M1732 581h21v21h-21z" fill="#2d009e"/>
<path d="M1752 581h21v21h-21z" fill="#34009e"/>
<path d="M1772 581h21v21h-21z" fill="#3b009e"/>
<path d="M1792 581h21v21h-21z" fill="#43009e"/>
<path d="M1812 581h21v21h-21z" fill="#4a009e"/>
<path d="M1832 581h21v21h-21z" fill="#51009e"/>
<path d="M1572 601h21v21h-21z" fill="#00009e"/>
<path d="M1592 601h21v21h-21z" fill="#00009e"/>
<path d="M1612 601h21v21h-21z" fill="#02009e"/>
<path d="M1632 601h21v21h-21z" fill="#09009e"/>
<path d="M1652 601h21v21h-21z" fill="#0f009e"/>
<path d="M1672 601h21v21h-21z" fill="#16009e"/>
<path d="M1692 601h21v21h-21z" fill="#1d009e"/>
<path d="M1712 601h21v21h-21z" fill="#23009e"/>
<path d="M1732 601h21v21h-21z" fill="#2a009e"/>
<path d="M1752 601h21v21h-21z" fill="#31009e"/>
<path d="M1772 601h21v21h-21z" fill="#38009e"/>
<path d="M1792 601h21v21h-21z" fill="#3f009e"/>
<path d="M1812 601h21v21h-21z" fill="#46009e"/>
<path d="M1592 621h21v21h-21z" fill="#00009e"/>
<path d="M1612 621h21v21h-21z" fill="#01009e"/>
<path d="M1632 621h21v21h-21z" fill="#07009e"/>
<path d="M1652 621h21v21h-21z" fill="#0e009e"/>
<path d="M1672 621h21v21h-21z" fill="#14009e"/>
<path d="M1692 621h21v21h-21z" fill="#1a009e"/>
<path d="M1712 621h21v21h-21z" fill="#21009e"/>
<path d="M1732 621h21v21h-21z" fill="#27009e"/>
<path d="M1752 621h21v21h-21z" fill="#2e009e"/>
<path d="M1772 621h21v21h-21z" fill="#35009e"/>
<path d="M1792 621h21v21h-21z" fill="#3b009e"/>
<path d="M1612 641h21v21h-21z" fill="#00009e"/>
<path d="M1632 641h21v21h-21z" fill="#06009e"/>
<path d="M1652 641h21v21h-21z" fill="#0c009e"/>
<path d="M1672 641h21v21h-21z" fill="#12009e"/>
<path d="M1692 641h21v21h-21z" fill="#18009e"/>
<path d="M1712 641h21v21h-21z" fill="#1f009e"/>
<path d="M1732 641h21v21h-21z" fill="#25009e"/>
<path d="M1752 641h21v21h-21z" fill="#2b009e"/>
<path d="M1772 641h21v21h-21z" fill="#32009e"/>
<path d="M1632 661h21v21h-21z" fill="#05009e"/>
<path d="M1652 661h21v21h-21z" fill="#0b009e"/>
<path d="M1672 661h21v21h-21z" fill="#11009e"/>
<path d="M1692 661h21v21h-21z" fill="#17009e"/>
<path d="M1712 661h21v21h-21z" fill="#1d009e"/>
<path d="M1732 661h21v21h-21z" fill="#23009e"/>
<path d="M1752 661h21v21h-21z" fill="#29009e"/>
<path d="M1672 681h21v21h-21z" fill="#0f009e"/>
<path d="M1692 681h21v21h-21z" fill="#15009e"/>
<path d="M1712 681h21v21h-21z" fill="#1b009e"/>
<path d="M1732 681h21v21h-21z" fill="#21009e"/>
</g></g>
<g>
<path d="M846 781h26v26h-26z" fill="#8cffd1"/>
<path d="M871 781h26v26h-26z" fill="#94ffd1"/>
<path d="M896 781h26v26h-26z" fill="#9cfed1"/>
<path d="M921 781h26v26h-26z" fill="#a4ffd0"/>
<path d="M946 781h26v26h-26z" fill="#acffd0"/>
<path d="M971 781h26v26h-26z" fill="#b4ffd0"/>
<path d="M996 781h26v26h-26z" fill="#bcffcf"/>
<path d="M1021 781h26v26h-26z" fill="#c5ffcf"/>
<path d="M1046 781h26v26h-26z" fill="#cdffcf"/>
<path d="M1071 781h26v26h-26z" fill="#d6ffce"/>
<path d="M1096 781h26v26h-26z" fill="#dfffce"/>
<path d="M1121 781h26v26h-26z" fill="#e8ffcd"/>
<path d="M1146 781h26v26h-26z" fill="#f1ffcd"/>
<path d="M1171 781h26v26h-26z" fill="#faffcd"/>
<path d="M1196 781h26v26h-26z" fill="#fff9c8"/>
<path d="M1221 781h26v26h-26z" fill="#fef0c1"/>
<path d="M1246 781h26v26h-26z" fill="#ffe8ba"/>
<path d="M1271 781h25v26h-25z" fill="#ffe0b3"/>
<path d="M846 806h26v26h-26z" fill="#92feda"/>
<path d="M871 806h26v26h-26z" fill="#9affda"/>
<path d="M896 806h26v26h-26z" fill="#a3ffd9"/>
<path d="M921 806h26v26h-26z" fill="#abffd9"/>
<path d="M946 806h26v26h-26z" fill="#b3ffd9"/>
<path d="M971 806h26v26h-26z" fill="#bcffd9"/>
<path d="M996 806h26v26h-26z" fill="#c4ffd8"/>
<path d="M1021 806h26v26h-26z" fill="#cdffd8"/>
<path d="M1046 806h26v26h-26z" fill="#d6ffd8"/>
<path d="M1071 806h26v26h-26z" fill="#dfffd8"/>
<path d="M1096 806h26v26h-26z" fill="#e8ffd7"/>
<path d="M1121 806h26v26h-26z" fill="#f1ffd7"/>
<path d="M1146 806h26v26h-26z" fill="#fbffd7"/>
<path d="M1171 806h26v26h-26z" fill="#fff9d1"/>
<path d="M1196 806h26v26h-26z" fill="#fff0ca"/>
<path d="M1221 806h26v26h-26z" fill="#ffe7c2"/>
<path d="M1246 806h26v26h-26z" fill="#ffdfbb"/>
<path d="M1271 806h25v26h-25z" fill="#ffd8b4"/>
<path d="M846 831h26v26h-26z" fill="#99ffe3"/>
<path d="M871 831h26v26h-26z" fill="#a2ffe3"/>
<path d="M896 831h26v26h-26z" fill="#aaffe3"/>
<path d="M921 831h26v26h-26z" fill="#b2ffe3"/>
<path d="M946 831h26v26h-26z" fill="#bbffe2"/>
<path d="M971 831h26v26h-26z" fill="#c4ffe2"/>
<path d="M996 831h26v26h-26z" fill="#cdffe2"/>
<path d="M1021 831h26v26h-26z" fill="#d6ffe2"/>
<path d="M1046 831h26v26h-26z" fill="#dfffe2"/>
<path d="M1071 831h26v26h-26z" fill="#e8ffe1"/>
<path d="M1096 831h26v26h-26z" fill="#f2ffe1"/>
<path d="M1121 831h26v26h-26z" fill="#fbffe1"/>
<path d="M1146 831h26v26h-26z" fill="#fef8db"/>
<path d="M1171 831h26v26h-26z" fill="#ffefd3"/>
<path d="M1196 831h26v26h-26z" fill="#ffe6cb"/>
<path d="M1221 831h26v26h-26z" fill="#ffdec4"/>
<path d="M1246 831h26v26h-26z" fill="#fed7bd"/>
<path d="M1271 831h25v26h-25z" fill="#ffcfb6"/>
<path d="M846 856h26v26h-26z" fill="#a0ffed"/>
<path d="M871 856h26v26h-26z" fill="#a9feed"/>
<path d="M896 856h26v26h-26z" fill="#b2ffed"/>
<path d="M921 856h26v26h-26z" fill="#baffec"/>
<path d="M946 856h26v26h-26z" fill="#c3ffec"/>
<path d="M971 856h26v26h-26z" fill="#ccffec"/>
<path d="M996 856h26v26h-26z" fill="#d5ffec"/>
<path d="M1021 856h26v26h-26z" fill="#dfffec"/>
<path d="M1046 856h26v26h-26z" fill="#e8ffec"/>
<path d="M1071 856h26v26h-26z" fill="#f2ffec"/>
<path d="M1096 856h26v26h-26z" fill="#fcffec"/>
<path d="M1121 856h26v26h-26z" fill="#fff8e5"/>
<path d="M1146 856h26v26h-26z" fill="#ffeedc"/>
<path d="M1171 856h26v26h-26z" fill="#ffe6d4"/>
<path d="M1196 856h26v26h-26z" fill="#ffddcc"/>
<path d="M1221 856h26v26h-26z" fill="#ffd6c5"/>
<path d="M1246 856h26v26h-26z" fill="#ffcebe"/>
<path d="M1271 856h25v26h-25z" fill="#ffc7b8"/>
<path d="M846 881h26v26h-26z" fill="#a8fff7"/>
<path d="M871 881h26v26h-26z" fill="#b1fff7"/>
<path d="M896 881h26v26h-26z" fill="#bafff7"/>
<path d="M921 881h26v26h-26z" fill="#c3fff7"/>
<path d="M946 881h26v26h-26z" fill="#ccfff7"/>
<path d="M971 881h26v26h-26z" fill="#d5fff7"/>
<path d="M996 881h26v26h-26z" fill="#dffff7"/>
<path d="M1021 881h26v26h-26z" fill="#e8fff7"/>
<path d="M1046 881h26v26h-26z" fill="#f2fff7"/>
<path d="M1071 881h26v26h-26z" fill="#fcfff7"/>
<path d="M1096 881h26v26h-26z" fill="#fff7ef"/>
<path d="M1121 881h26v26h-26z" fill="#ffeee6"/>
<path d="M1146 881h26v26h-26z" fill="#ffe5de"/>
<path d="M1171 881h26v26h-26z" fill="#ffddd5"/>
<path d="M1196 881h26v26h-26z" fill="#ffd5ce"/>
<path d="M1221 881h26v26h-26z" fill="#ffcdc7"/>
<path d="M1246 881h26v26h-26z" fill="#ffc6c0"/>
<path d="M1271 881h25v26h-25z" fill="#ffbfb9"/>
<path d="M846 906h26v26h-26z" fill="#aefbff"/>
<path d="M871 906h26v26h-26z" fill="#b7fbff"/>
<path d="M896 906h26v26h-26z" fill="#c0fbff"/>
<path d="M921 906h26v26h-26z" fill="#c9fbff"/>
<path d="M946 906h26v26h-26z" fill="#d2fbff"/>
<path d="M971 906h26v26h-26z" fill="#dcfbff"/>
<path d="M996 906h26v26h-26z" fill="#e5fbff"/>
<path d="M1021 906h26v26h-26z" fill="#effbfe"/>
<path d="M1046 906h26v26h-26z" fill="#f9fbff"/>
<path d="M1071 906h26v26h-26z" fill="#fff6fa"/>
<path d="M1096 906h26v26h-26z" fill="#ffedf0"/>
<path d="M1121 906h26v26h-26z" fill="#fee4e7"/>
<path d="M1146 906h26v26h-26z" fill="#ffdcdf"/>
<path d="M1171 906h26v26h-26z" fill="#ffd4d7"/>
<path d="M1196 906h26v26h-26z" fill="#ffcccf"/>
<path d="M1221 906h26v26h-26z" fill="#ffc5c8"/>
<path d="M1246 906h26v26h-26z" fill="#febec1"/>
<path d="M1271 906h25v26h-25z" fill="#ffb8bb"/>
<path d="M846 931h26v26h-26z" fill="#aef1ff"/>
<path d="M871 931h26v26h-26z" fill="#b7f1ff"/>
<path d="M896 931h26v26h-26z" fill="#c0f1ff"/>
<path d="M921 931h26v26h-26z" fill="#c9f1ff"/>
<path d="M946 931h26v26h-26z" fill="#d2f0ff"/>
<path d="M971 931h26v26h-26z" fill="#dcf0ff"/>
<path d="M996 931h26v26h-26z" fill="#e5f0ff"/>
<path d="M1021 931h26v26h-26z" fill="#eff0ff"/>
<path d="M1046 931h26v26h-26z" fill="#f8f0ff"/>
<path d="M1071 931h26v26h-26z" fill="#ffecfb"/>
<path d="M1096 931h26v26h-26z" fill="#ffe3f1"/>
<path d="M1121 931h26v26h-26z" fill="#ffdbe8"/>
<path d="M1146 931h26v26h-26z" fill="#ffd3e0"/>
<path d="M1171 931h26v26h-26z" fill="#ffcbd8"/>
<path d="M1196 931h26v26h-26z" fill="#fec4d0"/>
<path d="M1221 931h26v26h-26z" fill="#ffbdc9"/>
<path d="M1246 931h26v26h-26z" fill="#ffb6c2"/>
<path d="M1271 931h25v26h-25z" fill="#ffb0bc"/>
<path d="M846 956h26v26h-26z" fill="#afe7ff"/>
<path d="M871 956h26v26h-26z" fill="#b8e7ff"/>
<path d="M896 956h26v26h-26z" fill="#c0e6ff"/>
<path d="M921 956h26v26h-26z" fill="#c9e6ff"/>
<path d="M946 956h26v26h-26z" fill="#d2e6ff"/>
<path d="M971 956h26v26h-26z" fill="#dbe6ff"/>
<path d="M996 956h26v26h-26z" fill="#e5e6ff"/>
<path d="M1021 956h26v26h-26z" fill="#eee5ff"/>
<path d="M1046 956h26v26h-26z" fill="#f8e5ff"/>
<path d="M1071 956h26v26h-26z" fill="#ffe2fc"/>
<path d="M1096 956h26v26h-26z" fill="#ffdaf2"/>
<path d="M1121 956h26v26h-26z" fill="#ffd1e9"/>
<path d="M1146 956h26v26h-26z" fill="#ffcae1"/>
<path d="M1171 956h26v26h-26z" fill="#ffc3d9"/>
<path d="M1196 956h26v26h-26z" fill="#ffbcd2"/>
<path d="M1221 956h26v26h-26z" fill="#ffb5cb"/>
<path d="M1246 956h26v26h-26z" fill="#ffafc4"/>
<path d="M1271 956h25v26h-25z" fill="#ffa9bd"/>
<path d="M846 981h26v26h-26z" fill="#afddff"/>
<path d="M871 981h26v26h-26z" fill="#b8ddff"/>
<path d="M896 981h26v26h-26z" fill="#c1ddff"/>
<path d="M921 981h26v26h-26z" fill="#c9dcff"/>
<path d="M946 981h26v26h-26z" fill="#d2dcff"/>
<path d="M971 981h26v26h-26z" fill="#dbdcff"/>
<path d="M996 981h26v26h-26z" fill="#e4dbff"/>
<path d="M1021 981h26v26h-26z" fill="#eedbff"/>
<path d="M1046 981h26v26h-26z" fill="#f7dbff"/>
<path d="M1071 981h26v26h-26z" fill="#ffd9fc"/>
<path d="M1096 981h26v26h-26z" fill="#ffd0f3"/>
<path d="M1121 981h26v26h-26z" fill="#ffc9ea"/>
<path d="M1146 981h26v26h-26z" fill="#ffc1e2"/>
<path d="M1171 981h26v26h-26z" fill="#ffbada"/>
<path d="M1196 981h26v26h-26z" fill="#ffb4d3"/>
<path d="M1221 981h26v26h-26z" fill="#ffadcc"/>
<path d="M1246 981h26v26h-26z" fill="#ffa7c5"/>
<path d="M1271 981h25v26h-25z" fill="#ffa2bf"/>
<path d="M846 1006h26v26h-26z" fill="#b0d4ff"/>
<path d="M871 1006h26v26h-26z" fill="#b8d3ff"/>
<path d="M896 1006h26v26h-26z" fill="#c1d3fe"/>
<path d="M921 1006h26v26h-26z" fill="#c9d3ff"/>
<path d="M946 1006h26v26h-26z" fill="#d2d2ff"/>
<path d="M971 1006h26v26h-26z" fill="#dbd2ff"/>
<path d="M996 1006h26v26h-26z" fill="#e4d1ff"/>
<path d="M1021 1006h26v26h-26z" fill="#edd1ff"/>
<path d="M1046 1006h26v26h-26z" fill="#f6d1ff"/>
<path d="M1071 1006h26v26h-26z" fill="#ffcffd"/>
<path d="M1096 1006h26v26h-26z" fill="#ffc7f4"/>
<path d="M1121 1006h26v26h-26z" fill="#ffc0eb"/>
<path d="M1146 1006h26v26h-26z" fill="#ffb9e3"/>
<path d="M1171 1006h26v26h-26z" fill="#ffb2db"/>
<path d="M1196 1006h26v26h-26z" fill="#ffacd4"/>
<path d="M1221 1006h26v26h-26z" fill="#ffa6cd"/>
<path d="M1246 1006h26v26h-26z" fill="#ffa0c6"/>
<path d="M1271 1006h25v26h-25z" fill="#ff9bc0"/>
<path d="M846 1031h26v10h-26z" fill="#b1caff"/>
<path d="M871 1031h26v10h-26z" fill="#b9caff"/>
<path d="M896 1031h26v10h-26z" fill="#c1caff"/>
<path d="M921 1031h26v10h-26z" fill="#cac9ff"/>
<path d="M946 1031h26v10h-26z" fill="#d2c9ff"/>
<path d="M971 1031h26v10h-26z" fill="#dbc8ff"/>
<path d="M996 1031h26v10h-26z" fill="#e4c8fe"/>
<path d="M1021 1031h26v10h-26z" fill="#edc7fe"/>
<path d="M1046 1031h26v10h-26z" fill="#f6c7ff"/>
<path d="M1071 1031h26v10h-26z" fill="#ffc6fe"/>
<path d="M1096 1031h26v10h-26z" fill="#ffbff5"/>
<path d="M1121 1031h26v10h-26z" fill="#ffb8ec"/>
<path d="M1146 1031h26v10h-26z" fill="#ffb1e4"/>
<path d="M1171 1031h26v10h-26z" fill="#ffaadd"/>
<path d="M1196 1031h26v10h-26z" fill="#ffa4d5"/>
<path d="M1221 1031h26v10h-26z" fill="#ff9fce"/>
<path d="M1246 1031h26v10h-26z" fill="#ff99c8"/>
<path d="M1271 1031h25v10h-25z" fill="#ff94c1"/>
</g>
</svg>
<canvas id="cuv" width="846" height="651" style="z-index:2"></canvas>
<canvas id="cxy" width="450" height="260" style="z-index:2"></canvas>
<svg width="2212" height="1286" viewBox="0 0 2212 1286" style="z-index:3">

<rect x="1350.00" y="39.00" width="850.00" height="2.00" fill="#8c8c8c" />
<rect x="1350.00" y="39.00" width="2.00" height="655.00" fill="#8c8c8c" />
<rect x="2198.00" y="39.00" width="2.00" height="655.00" fill="#8c8c8c" />
<rect x="1350.00" y="692.00" width="850.00" height="2.00" fill="#8c8c8c" />
<rect x="1343.00" y="692.50" width="7.00" height="2.00" fill="#d8d8d8" />
<text x="1332.55" y="700.50" font-size="19.13" fill="#d6d6d6" >0</text>
<rect x="1349.60" y="694.00" width="2.00" height="7.00" fill="#d8d8d8" />
<text x="1345.24" y="721.60" font-size="19.13" fill="#d6d6d6" >0</text>
<rect x="1343.00" y="638.20" width="7.00" height="2.00" fill="#d8d8d8" />
<text x="1306.06" y="646.20" font-size="19.13" fill="#d6d6d6" >0.05</text>
<rect x="1420.25" y="694.00" width="2.00" height="7.00" fill="#d8d8d8" />
<text x="1402.65" y="721.60" font-size="19.13" fill="#d6d6d6" >0.05</text>
<rect x="1343.00" y="583.90" width="7.00" height="2.00" fill="#d8d8d8" />
<text x="1316.77" y="591.90" font-size="19.13" fill="#d6d6d6" >0.1</text>
<rect x="1490.90" y="694.00" width="2.00" height="7.00" fill="#d8d8d8" />
<text x="1478.65" y="721.60" font-size="19.13" fill="#d6d6d6" >0.1</text>
<rect x="1343.00" y="529.60" width="7.00" height="2.00" fill="#d8d8d8" />
<text x="1306.06" y="537.60" font-size="19.13" fill="#d6d6d6" >0.15</text>
<rect x="1561.55" y="694.00" width="2.00" height="7.00" fill="#d8d8d8" />
<text x="1543.95" y="721.60" font-size="19.13" fill="#d6d6d6" >0.15</text>
<rect x="1343.00" y="475.30" width="7.00" height="2.00" fill="#d8d8d8" />
<text x="1316.87" y="483.30" font-size="19.13" fill="#d6d6d6" >0.2</text>
<rect x="1632.20" y="694.00" width="2.00" height="7.00" fill="#d8d8d8" />
<text x="1620.00" y="721.60" font-size="19.13" fill="#d6d6d6" >0.2</text>
<rect x="1343.00" y="421.00" width="7.00" height="2.00" fill="#d8d8d8" />
<text x="1306.06" y="429.00" font-size="19.13" fill="#d6d6d6" >0.25</text>
<rect x="1702.85" y="694.00" width="2.00" height="7.00" fill="#d8d8d8" />
<text x="1685.25" y="721.60" font-size="19.13" fill="#d6d6d6" >0.25</text>
<rect x="1343.00" y="366.70" width="7.00" height="2.00" fill="#d8d8d8" />
<text x="1316.67" y="374.70" font-size="19.13" fill="#d6d6d6" >0.3</text>
<rect x="1773.50" y="694.00" width="2.00" height="7.00" fill="#d8d8d8" />
<text x="1761.20" y="721.60" font-size="19.13" fill="#d6d6d6" >0.3</text>
<rect x="1343.00" y="312.40" width="7.00" height="2.00" fill="#d8d8d8" />
<text x="1306.06" y="320.40" font-size="19.13" fill="#d6d6d6" >0.35</text>
<rect x="1844.15" y="694.00" width="2.00" height="7.00" fill="#d8d8d8" />
<text x="1826.55" y="721.60" font-size="19.13" fill="#d6d6d6" >0.35</text>
<rect x="1343.00" y="258.10" width="7.00" height="2.00" fill="#d8d8d8" />
<text x="1316.48" y="266.10" font-size="19.13" fill="#d6d6d6" >0.4</text>
<rect x="1914.80" y="694.00" width="2.00" height="7.00" fill="#d8d8d8" />
<text x="1902.41" y="721.60" font-size="19.13" fill="#d6d6d6" >0.4</text>
<rect x="1343.00" y="203.80" width="7.00" height="2.00" fill="#d8d8d8" />
<text x="1306.06" y="211.80" font-size="19.13" fill="#d6d6d6" >0.45</text>
<rect x="1985.45" y="694.00" width="2.00" height="7.00" fill="#d8d8d8" />
<text x="1967.85" y="721.60" font-size="19.13" fill="#d6d6d6" >0.45</text>
<rect x="1343.00" y="149.50" width="7.00" height="2.00" fill="#d8d8d8" />
<text x="1316.67" y="157.50" font-size="19.13" fill="#d6d6d6" >0.5</text>
<rect x="2056.10" y="694.00" width="2.00" height="7.00" fill="#d8d8d8" />
<text x="2043.80" y="721.60" font-size="19.13" fill="#d6d6d6" >0.5</text>
<rect x="1343.00" y="95.20" width="7.00" height="2.00" fill="#d8d8d8" />
<text x="1306.06" y="103.20" font-size="19.13" fill="#d6d6d6" >0.55</text>
<rect x="2126.75" y="694.00" width="2.00" height="7.00" fill="#d8d8d8" />
<text x="2109.15" y="721.60" font-size="19.13" fill="#d6d6d6" >0.55</text>
<text x="1695.44" y="33.30" font-size="20.29" fill="#d6d6d6" textLength="113.54" lengthAdjust="spacingAndGlyphs" >CIE 1976 u'v'</text>
<text x="1951.00" y="75.00" font-size="21.74" fill="#f0f0f0" textLength="153.61" lengthAdjust="spacingAndGlyphs" >Gamut coverage:</text>
<rect x="2114.50" y="46.00" width="79.50" height="34.50" fill="#2a2a2a" />
<rect x="2115.8" y="47" width="77.4" height="32.3" fill="url(#gDrop)"/>
<text x="2119.84" y="74.20" font-size="20.72" fill="#f2f2f2" textLength="34.43" lengthAdjust="spacingAndGlyphs" >u'v'</text>
<path d="M2174,59.7 L2187,59.7 L2180.5,68 Z" fill="#000"/>
<rect x="1861.00" y="650.00" width="334.00" height="35.40" fill="#333333" />
<text x="1860.68" y="677.80" font-size="27.54" fill="#f2f2f2" textLength="208.78" lengthAdjust="spacingAndGlyphs" >Gamut Coverage:</text>
<text x="2081.01" y="677.80" font-size="27.54" fill="#f2f2f2" textLength="75.24" lengthAdjust="spacingAndGlyphs" >95.6%</text>
<rect x="1978.30" y="114.01" width="17.5" height="17.5" fill="none" stroke="#ffffff" stroke-width="2"/>
<rect x="1518.15" y="70.93" width="17.5" height="17.5" fill="none" stroke="#ffffff" stroke-width="2"/>
<rect x="1589.41" y="510.94" width="17.5" height="17.5" fill="none" stroke="#ffffff" stroke-width="2"/>
<rect x="1536.97" y="187.34" width="17.5" height="17.5" fill="none" stroke="#ffffff" stroke-width="2"/>
<rect x="1772.45" y="324.04" width="17.5" height="17.5" fill="none" stroke="#ffffff" stroke-width="2"/>
<rect x="1629.64" y="81.36" width="17.5" height="17.5" fill="none" stroke="#ffffff" stroke-width="2"/>
<rect x="1621.04" y="173.35" width="17.5" height="17.5" fill="none" stroke="#000000" stroke-width="2"/>
<circle cx="1978.41" cy="121.68" r="5.5" fill="#c80000" stroke="#000" stroke-width="1.5"/>
<circle cx="1518.16" cy="79.68" r="5.5" fill="#00bb00" stroke="#000" stroke-width="1.5"/>
<circle cx="1595.32" cy="518.01" r="5.5" fill="#0000c8" stroke="#000" stroke-width="1.5"/>
<circle cx="1537.59" cy="197.49" r="5.5" fill="#00c0c0" stroke="#000" stroke-width="1.5"/>
<circle cx="1769.85" cy="329.35" r="5.5" fill="#c000c0" stroke="#000" stroke-width="1.5"/>
<circle cx="1632.81" cy="89.54" r="5.5" fill="#bcbc00" stroke="#000" stroke-width="1.5"/>
<circle cx="1624.68" cy="184.68" r="5.5" fill="#ffffff" stroke="#000" stroke-width="1.5"/>
<circle cx="1002.4" cy="915.6" r="5.4" fill="#b8b8b8" stroke="#000" stroke-width="1.8"/>
<circle cx="1011.7" cy="924.2" r="5.4" fill="#ffffff" stroke="#000" stroke-width="1.8"/>
<path d="M1059.2,900.2 H1080.9 V919.8 H1059.2 Z M1062.8,902 V918 H1077.3 V902 Z" fill="#000" fill-rule="evenodd"/>
<rect x="1319.00" y="758.00" width="866.50" height="2.00" fill="#000000" />
<rect x="1319.00" y="758.00" width="2.00" height="298.00" fill="#000000" />
<rect x="2183.70" y="758.00" width="1.80" height="298.00" fill="#000000" />
<rect x="2161.00" y="760.00" width="22.70" height="45.00" fill="#333333" />
<rect x="1321.00" y="760.00" width="840.00" height="23.00" fill="#2d2d2d" />
<rect x="1321.00" y="783.00" width="840.00" height="22.00" fill="#141414" />
<clipPath id="tclip"><rect x="1321" y="805" width="840" height="225.5"/></clipPath>
<g clip-path="url(#tclip)">
<rect x="1321.00" y="805.00" width="840.00" height="41.20" fill="#404040" />
<text x="1338.39" y="834.90" font-size="25.07" fill="#f0f0f0" font-weight="bold" textLength="82.13" lengthAdjust="spacingAndGlyphs" >x: CIE31</text>
<text x="1449.44" y="834.90" font-size="25.07" fill="#f0f0f0" textLength="65.57" lengthAdjust="spacingAndGlyphs" >0.3053</text>
<text x="1552.64" y="834.90" font-size="25.07" fill="#f0f0f0" textLength="65.57" lengthAdjust="spacingAndGlyphs" >0.6366</text>
<text x="1655.84" y="834.90" font-size="25.07" fill="#f0f0f0" textLength="65.57" lengthAdjust="spacingAndGlyphs" >0.2880</text>
<text x="1758.94" y="834.90" font-size="25.07" fill="#f0f0f0" textLength="65.57" lengthAdjust="spacingAndGlyphs" >0.1488</text>
<text x="1849.54" y="834.90" font-size="25.07" fill="#f0f0f0" textLength="65.57" lengthAdjust="spacingAndGlyphs" >0.2158</text>
<text x="1952.74" y="834.90" font-size="25.07" fill="#f0f0f0" textLength="65.57" lengthAdjust="spacingAndGlyphs" >0.3161</text>
<text x="2055.44" y="834.90" font-size="25.07" fill="#f0f0f0" textLength="65.57" lengthAdjust="spacingAndGlyphs" >0.4142</text>
<rect x="1321.00" y="846.20" width="840.00" height="41.20" fill="#808080" />
<text x="1338.39" y="876.10" font-size="25.07" fill="#f0f0f0" font-weight="bold" textLength="82.13" lengthAdjust="spacingAndGlyphs" >y: CIE31</text>
<text x="1449.44" y="876.10" font-size="25.07" fill="#f0f0f0" textLength="65.57" lengthAdjust="spacingAndGlyphs" >0.3281</text>
<text x="1552.64" y="876.10" font-size="25.07" fill="#f0f0f0" textLength="65.57" lengthAdjust="spacingAndGlyphs" >0.3334</text>
<text x="1655.84" y="876.10" font-size="25.07" fill="#f0f0f0" textLength="65.57" lengthAdjust="spacingAndGlyphs" >0.6060</text>
<text x="1758.94" y="876.10" font-size="25.07" fill="#f0f0f0" textLength="65.57" lengthAdjust="spacingAndGlyphs" >0.0608</text>
<text x="1849.54" y="876.10" font-size="25.07" fill="#f0f0f0" textLength="65.57" lengthAdjust="spacingAndGlyphs" >0.3286</text>
<text x="1952.74" y="876.10" font-size="25.07" fill="#f0f0f0" textLength="65.57" lengthAdjust="spacingAndGlyphs" >0.1575</text>
<text x="2055.44" y="876.10" font-size="25.07" fill="#f0f0f0" textLength="65.57" lengthAdjust="spacingAndGlyphs" >0.5095</text>
<rect x="1321.00" y="887.40" width="840.00" height="41.20" fill="#404040" />
<text x="1338.18" y="917.30" font-size="25.07" fill="#f0f0f0" font-weight="bold" textLength="13.88" lengthAdjust="spacingAndGlyphs" >Y</text>
<text x="1449.23" y="917.30" font-size="25.07" fill="#f0f0f0" textLength="89.41" lengthAdjust="spacingAndGlyphs" >648.1997</text>
<text x="1551.89" y="917.30" font-size="25.07" fill="#f0f0f0" textLength="89.41" lengthAdjust="spacingAndGlyphs" >137.6974</text>
<text x="1656.27" y="917.30" font-size="25.07" fill="#f0f0f0" textLength="89.41" lengthAdjust="spacingAndGlyphs" >437.6531</text>
<text x="1759.37" y="917.30" font-size="25.07" fill="#f0f0f0" textLength="75.90" lengthAdjust="spacingAndGlyphs" >49.1138</text>
<text x="1849.54" y="917.30" font-size="25.07" fill="#f0f0f0" textLength="89.41" lengthAdjust="spacingAndGlyphs" >505.7080</text>
<text x="1951.99" y="917.30" font-size="25.07" fill="#f0f0f0" textLength="89.41" lengthAdjust="spacingAndGlyphs" >184.8758</text>
<text x="2055.44" y="917.30" font-size="25.07" fill="#f0f0f0" textLength="89.41" lengthAdjust="spacingAndGlyphs" >579.1855</text>
<rect x="1321.00" y="928.60" width="840.00" height="41.20" fill="#808080" />
<text x="1338.39" y="958.50" font-size="25.07" fill="#f0f0f0" font-weight="bold" textLength="81.34" lengthAdjust="spacingAndGlyphs" >Target Y</text>
<text x="1449.23" y="958.50" font-size="25.07" fill="#f0f0f0" textLength="87.82" lengthAdjust="spacingAndGlyphs" >651.5311</text>
<text x="1551.89" y="958.50" font-size="25.07" fill="#f0f0f0" textLength="89.41" lengthAdjust="spacingAndGlyphs" >138.5520</text>
<text x="1656.27" y="958.50" font-size="25.07" fill="#f0f0f0" textLength="89.41" lengthAdjust="spacingAndGlyphs" >465.9480</text>
<text x="1759.37" y="958.50" font-size="25.07" fill="#f0f0f0" textLength="77.49" lengthAdjust="spacingAndGlyphs" >47.0312</text>
<text x="1849.54" y="958.50" font-size="25.07" fill="#f0f0f0" textLength="89.41" lengthAdjust="spacingAndGlyphs" >512.9791</text>
<text x="1951.99" y="958.50" font-size="25.07" fill="#f0f0f0" textLength="89.41" lengthAdjust="spacingAndGlyphs" >185.5831</text>
<text x="2055.23" y="958.50" font-size="25.07" fill="#f0f0f0" textLength="89.41" lengthAdjust="spacingAndGlyphs" >604.5000</text>
<rect x="1321.00" y="969.80" width="840.00" height="41.20" fill="#404040" />
<text x="1337.77" y="999.70" font-size="25.07" fill="#f0f0f0" font-weight="bold" textLength="80.92" lengthAdjust="spacingAndGlyphs" >ΔE 2000</text>
<text x="1449.87" y="999.70" font-size="25.07" fill="#f0f0f0" textLength="65.57" lengthAdjust="spacingAndGlyphs" >4.0865</text>
<text x="1552.64" y="999.70" font-size="25.07" fill="#f0f0f0" textLength="65.57" lengthAdjust="spacingAndGlyphs" >0.6626</text>
<text x="1655.09" y="999.70" font-size="25.07" fill="#f0f0f0" textLength="65.57" lengthAdjust="spacingAndGlyphs" >1.9859</text>
<text x="1758.94" y="999.70" font-size="25.07" fill="#f0f0f0" textLength="65.57" lengthAdjust="spacingAndGlyphs" >0.6250</text>
<text x="1848.79" y="999.70" font-size="25.07" fill="#f0f0f0" textLength="65.57" lengthAdjust="spacingAndGlyphs" >1.5187</text>
<text x="1952.74" y="999.70" font-size="25.07" fill="#f0f0f0" textLength="65.57" lengthAdjust="spacingAndGlyphs" >0.9706</text>
<text x="2054.69" y="999.70" font-size="25.07" fill="#f0f0f0" textLength="65.57" lengthAdjust="spacingAndGlyphs" >1.6289</text>
<rect x="1321.00" y="1011.00" width="840.00" height="41.20" fill="#808080" />
<text x="1337.77" y="1040.90" font-size="25.07" fill="#f0f0f0" font-weight="bold" textLength="66.99" lengthAdjust="spacingAndGlyphs" >ΔE ITP</text>
<text x="1449.44" y="1040.90" font-size="25.07" fill="#f0f0f0" textLength="65.57" lengthAdjust="spacingAndGlyphs" >5.0936</text>
<text x="1552.64" y="1040.90" font-size="25.07" fill="#f0f0f0" textLength="65.57" lengthAdjust="spacingAndGlyphs" >5.3633</text>
<text x="1655.63" y="1040.90" font-size="25.07" fill="#f0f0f0" textLength="65.57" lengthAdjust="spacingAndGlyphs" >7.5670</text>
<text x="1759.37" y="1040.90" font-size="25.07" fill="#f0f0f0" textLength="65.57" lengthAdjust="spacingAndGlyphs" >4.3285</text>
<text x="1849.33" y="1040.90" font-size="25.07" fill="#f0f0f0" textLength="65.57" lengthAdjust="spacingAndGlyphs" >6.5863</text>
<text x="1952.74" y="1040.90" font-size="25.07" fill="#f0f0f0" textLength="65.57" lengthAdjust="spacingAndGlyphs" >0.9583</text>
<text x="2055.87" y="1040.90" font-size="25.07" fill="#f0f0f0" textLength="65.57" lengthAdjust="spacingAndGlyphs" >4.8160</text>
</g>
<text x="1468.09" y="791.80" font-size="22.61" fill="#f4f4f4" textLength="56.23" lengthAdjust="spacingAndGlyphs" >White</text>
<text x="1580.40" y="791.80" font-size="22.61" fill="#f4f4f4" textLength="36.80" lengthAdjust="spacingAndGlyphs" >Red</text>
<text x="1673.15" y="791.80" font-size="22.61" fill="#f4f4f4" textLength="58.19" lengthAdjust="spacingAndGlyphs" >Green</text>
<text x="1777.29" y="791.80" font-size="22.61" fill="#f4f4f4" textLength="42.70" lengthAdjust="spacingAndGlyphs" >Blue</text>
<text x="1872.59" y="791.80" font-size="22.61" fill="#f4f4f4" textLength="47.22" lengthAdjust="spacingAndGlyphs" >Cyan</text>
<text x="1956.79" y="791.80" font-size="22.61" fill="#f4f4f4" textLength="83.25" lengthAdjust="spacingAndGlyphs" >Magenta</text>
<text x="2072.08" y="791.80" font-size="22.61" fill="#f4f4f4" textLength="59.70" lengthAdjust="spacingAndGlyphs" >Yellow</text>
<rect x="2161.00" y="805.00" width="22.70" height="225.00" fill="#626262" />
<rect x="2163" y="807.4" width="19" height="21.4" rx="4" fill="#868686" stroke="#939393" stroke-width="1"/>
<path d="M2165.5,820.5 L2179.5,820.5 L2172.5,812 Z" fill="#3a3a3a"/>
<rect x="2163" y="832.5" width="19" height="140.4" rx="9" fill="#444444"/>
<rect x="2163" y="1006.2" width="19" height="21.1" rx="4" fill="#868686" stroke="#939393" stroke-width="1"/>
<path d="M2165.5,1012.5 L2179.5,1012.5 L2172.5,1021 Z" fill="#3a3a3a"/>
<rect x="1321.00" y="1030.00" width="840.00" height="26.00" fill="#656565" />
<rect x="1323" y="1032.3" width="18.7" height="21.5" rx="4" fill="#868686" stroke="#939393" stroke-width="1"/>
<path d="M1336,1035.5 L1336,1051 L1329,1043.2 Z" fill="#444"/>
<rect x="1346" y="1031.8" width="698" height="22" rx="11" fill="#444444"/>
<rect x="2139.5" y="1032.3" width="18.7" height="21.5" rx="4" fill="#868686" stroke="#939393" stroke-width="1"/>
<path d="M2145,1035.5 L2145,1051 L2152.5,1043.2 Z" fill="#444"/>
<rect x="2161.00" y="1030.00" width="22.70" height="26.00" fill="#333333" />
<rect x="1215" y="1223" width="997" height="61" fill="url(#gTool)"/>
<rect x="1.20" y="1223" width="150" height="61" rx="4" fill="url(#gBtn)"/>
<rect x="6.50" y="1228" width="139.6" height="36" rx="4" fill="#c0c0c0"/>
<rect x="6.50" y="1228" width="139.6" height="36" rx="4" fill="url(#gSwIn)"/>
<text x="62.48" y="1278.70" font-size="11.88" fill="#2c2c2c" font-weight="bold" textLength="27.82" lengthAdjust="spacingAndGlyphs" >White</text>
<rect x="153.20" y="1223" width="150" height="61" rx="4" fill="url(#gBtn)"/>
<rect x="158.50" y="1228" width="139.6" height="36" rx="4" fill="#c00000"/>
<rect x="158.50" y="1228" width="139.6" height="36" rx="4" fill="url(#gSwIn)"/>
<text x="218.54" y="1278.70" font-size="11.88" fill="#2c2c2c" font-weight="bold" textLength="19.31" lengthAdjust="spacingAndGlyphs" >Red</text>
<rect x="305.20" y="1223" width="150" height="61" rx="4" fill="url(#gBtn)"/>
<rect x="310.50" y="1228" width="139.6" height="36" rx="4" fill="#00c000"/>
<rect x="310.50" y="1228" width="139.6" height="36" rx="4" fill="url(#gSwIn)"/>
<text x="365.53" y="1278.70" font-size="11.88" fill="#2c2c2c" font-weight="bold" textLength="29.54" lengthAdjust="spacingAndGlyphs" >Green</text>
<rect x="457.20" y="1223" width="150" height="61" rx="4" fill="url(#gBtn)"/>
<rect x="462.50" y="1228" width="139.6" height="36" rx="4" fill="#0000c0"/>
<rect x="462.50" y="1228" width="139.6" height="36" rx="4" fill="url(#gSwIn)"/>
<text x="520.98" y="1278.70" font-size="11.88" fill="#2c2c2c" font-weight="bold" textLength="22.15" lengthAdjust="spacingAndGlyphs" >Blue</text>
<rect x="609.20" y="1223" width="150" height="61" rx="4" fill="url(#gBtn)"/>
<rect x="614.50" y="1228" width="139.6" height="36" rx="4" fill="#00c0c0"/>
<rect x="614.50" y="1228" width="139.6" height="36" rx="4" fill="url(#gSwIn)"/>
<text x="671.81" y="1278.70" font-size="11.88" fill="#2c2c2c" font-weight="bold" textLength="24.99" lengthAdjust="spacingAndGlyphs" >Cyan</text>
<rect x="761.20" y="1223" width="150" height="61" rx="4" fill="url(#gBtn)"/>
<rect x="766.50" y="1228" width="139.6" height="36" rx="4" fill="#c000c0"/>
<rect x="766.50" y="1228" width="139.6" height="36" rx="4" fill="url(#gSwIn)"/>
<text x="815.10" y="1278.70" font-size="11.88" fill="#2c2c2c" font-weight="bold" textLength="41.46" lengthAdjust="spacingAndGlyphs" >Magenta</text>
<rect x="913.20" y="1223" width="150" height="61" rx="4" fill="url(#gBtn)"/>
<rect x="918.50" y="1228" width="139.6" height="36" rx="4" fill="#c4c400"/>
<rect x="918.50" y="1228" width="139.6" height="36" rx="4" fill="url(#gSwIn)"/>
<text x="972.18" y="1278.70" font-size="11.88" fill="#2c2c2c" font-weight="bold" textLength="31.81" lengthAdjust="spacingAndGlyphs" >Yellow</text>
<rect x="1065" y="1223" width="150" height="61" rx="4" fill="url(#gBtnSel)"/>
<rect x="1070" y="1228" width="140.4" height="36" rx="4" fill="#ffffff"/>
<text x="1125.00" y="1278.70" font-size="12.46" fill="#ffffff" font-weight="bold" textLength="29.30" lengthAdjust="spacingAndGlyphs" >100W</text>
<rect x="1891.3" y="1242" width="47.5" height="42" rx="3" fill="url(#gBtn2)"/>
<rect x="1900.5" y="1248.5" width="29" height="28.5" rx="4" fill="none" stroke="#2a2a2a" stroke-width="2.5"/>
<rect x="1908.00" y="1256.00" width="14.00" height="13.00" fill="#000" />
<rect x="1940" y="1223.4" width="226" height="29" rx="2" fill="url(#gBtn2)"/>
<rect x="1986.20" y="1223.40" width="1.00" height="28.90" fill="#555" />
<rect x="2031.00" y="1223.40" width="1.00" height="28.90" fill="#555" />
<rect x="2075.80" y="1223.40" width="1.00" height="28.90" fill="#555" />
<rect x="2120.90" y="1223.40" width="1.00" height="28.90" fill="#555" />
<rect x="1940.2" y="1254" width="272" height="30" rx="3" fill="url(#gBtn3)"/>
<rect x="2075.80" y="1254.00" width="1.00" height="30.00" fill="#666" />
<circle cx="1970.5" cy="1269" r="10" fill="url(#gCirc)"/>
<circle cx="2184.2" cy="1269" r="10" fill="url(#gCirc)"/>
<path d="M1972.5,1262.5 L1966.5,1268.5 L1972.5,1274.5 M1977,1262.5 L1971,1268.5 L1977,1274.5" fill="none" stroke="#333" stroke-width="1.8"/>
<path d="M2182.2,1262.5 L2188.2,1268.5 L2182.2,1274.5 M2177.7,1262.5 L2183.7,1268.5 L2177.7,1274.5" fill="none" stroke="#333" stroke-width="1.8"/>
<text x="1996.14" y="1276.30" font-size="21.74" fill="#2a2a2a" textLength="51.82" lengthAdjust="spacingAndGlyphs" >Back</text>
<text x="2102.41" y="1276.30" font-size="21.74" fill="#2a2a2a" textLength="53.75" lengthAdjust="spacingAndGlyphs" >Next</text>
<rect x="0.00" y="1284.30" width="2212.00" height="1.70" fill="#6a4642" />
<rect x="2206" y="740" width="6" height="483" fill="url(#gEdge)"/>
<circle cx="1963.0" cy="1240" r="10" fill="#b4b4b4" opacity="0.55"/>
<circle cx="1963.0" cy="1238" r="7" fill="#7a7a7a" opacity="0.35"/>
<circle cx="2009.0" cy="1240" r="10" fill="#b4b4b4" opacity="0.55"/>
<circle cx="2009.0" cy="1238" r="7" fill="#7a7a7a" opacity="0.35"/>
<circle cx="2054.0" cy="1240" r="10" fill="#b4b4b4" opacity="0.55"/>
<circle cx="2054.0" cy="1238" r="7" fill="#7a7a7a" opacity="0.35"/>
<circle cx="2099.0" cy="1240" r="10" fill="#b4b4b4" opacity="0.55"/>
<circle cx="2099.0" cy="1238" r="7" fill="#7a7a7a" opacity="0.35"/>
<circle cx="2144.0" cy="1240" r="10" fill="#b4b4b4" opacity="0.55"/>
<circle cx="2144.0" cy="1238" r="7" fill="#7a7a7a" opacity="0.35"/>
<rect x="2166.00" y="1223.00" width="46.00" height="30.00" fill="#333333" />
<mask id="wmMask" maskUnits="userSpaceOnUse" x="1800" y="1190" width="412" height="96"><rect x="1800" y="1190" width="412" height="96" fill="#fff"/><g fill="#000" stroke="#000" stroke-width="1.4" stroke-linejoin="round"><text x="1883.78" y="1242.00" font-size="36.23"  font-weight="bold" textLength="197.66" lengthAdjust="spacingAndGlyphs" >NOTEBOOK</text><text x="2081.65" y="1242.00" font-size="36.23"  font-weight="bold" textLength="119.71" lengthAdjust="spacingAndGlyphs" >CHECK</text></g><path d="M1828.4,1204.9 L1877.3,1214.1 L1879.4,1244.5 L1839.1,1247.7 M1828.4,1204.9 L1829.9,1253 L1860.3,1268.6 L1915.5,1251.6 L1883.6,1246" fill="none" stroke="#000" stroke-width="5" stroke-linejoin="round" stroke-linecap="round"/><path d="M1840.1,1221.5 Q1844,1217 1848.3,1217.6 L1858.9,1228.3 L1882.9,1201.7 L1885.8,1203.8 L1857.5,1241.7 L1855.7,1241 L1847.6,1224.7 Q1845,1222 1841.9,1223 Z" fill="#000"/></mask>
<g mask="url(#wmMask)" opacity="0.78" fill="none" stroke="#d4d4d4" stroke-linejoin="round" stroke-linecap="round">
<path d="M1828.4,1204.9 L1877.3,1214.1 L1879.4,1244.5 L1839.1,1247.7 M1828.4,1204.9 L1829.9,1253 L1860.3,1268.6 L1915.5,1251.6 L1883.6,1246" stroke-width="8"/>
<path d="M1840.1,1221.5 Q1844,1217 1848.3,1217.6 L1858.9,1228.3 L1882.9,1201.7 L1885.8,1203.8 L1857.5,1241.7 L1855.7,1241 L1847.6,1224.7 Q1845,1222 1841.9,1223 Z" stroke-width="3"/>
<g stroke-width="4.4"><text x="1883.78" y="1242.00" font-size="36.23"  font-weight="bold" textLength="197.66" lengthAdjust="spacingAndGlyphs" >NOTEBOOK</text><text x="2081.65" y="1242.00" font-size="36.23"  font-weight="bold" textLength="119.71" lengthAdjust="spacingAndGlyphs" >CHECK</text></g>
</g>
<g opacity="0.55" fill="none" stroke-linejoin="round" stroke-linecap="round">
<path d="M1828.4,1204.9 L1877.3,1214.1 L1879.4,1244.5 L1839.1,1247.7 M1828.4,1204.9 L1829.9,1253 L1860.3,1268.6 L1915.5,1251.6 L1883.6,1246" stroke="#a8283a" stroke-width="5"/>
<path d="M1840.1,1221.5 Q1844,1217 1848.3,1217.6 L1858.9,1228.3 L1882.9,1201.7 L1885.8,1203.8 L1857.5,1241.7 L1855.7,1241 L1847.6,1224.7 Q1845,1222 1841.9,1223 Z" fill="#1a1a1a" stroke="none"/>
</g>
<g opacity="0.55" stroke-width="1.4" stroke-linejoin="round"><text x="1883.78" y="1242.00" font-size="36.23" fill="#a8283a" stroke="#a8283a" font-weight="bold" textLength="197.66" lengthAdjust="spacingAndGlyphs" >NOTEBOOK</text><text x="2081.65" y="1242.00" font-size="36.23" fill="#181818" stroke="#181818" font-weight="bold" textLength="119.71" lengthAdjust="spacingAndGlyphs" >CHECK</text></g>
<path d="M2188.00,1224.00 L2188.00,1249.00 M2198.83,1230.25 L2177.17,1242.75 M2198.83,1242.75 L2177.17,1230.25 " stroke="#f0f0f0" stroke-width="7" stroke-linecap="round" opacity="0.6"/>
<path d="M2188.00,1224.00 L2188.00,1249.00 M2198.83,1230.25 L2177.17,1242.75 M2198.83,1242.75 L2177.17,1230.25 " stroke="#e0101c" stroke-width="4.5" stroke-linecap="butt"/>
</svg>
<script>
(function(){
var L=[[0.1741,0.0050],[0.1740,0.0050],[0.1738,0.0049],[0.1736,0.0049],[0.1733,0.0048],[0.1730,0.0048],[0.1726,0.0048],[0.1721,0.0048],[0.1714,0.0051],[0.1703,0.0058],[0.1689,0.0069],[0.1669,0.0086],[0.1644,0.0109],[0.1611,0.0138],[0.1566,0.0177],[0.1510,0.0227],[0.1440,0.0297],[0.1355,0.0399],[0.1241,0.0578],[0.1096,0.0868],[0.0913,0.1327],[0.0687,0.2007],[0.0454,0.2950],[0.0235,0.4127],[0.0082,0.5384],[0.0039,0.6548],[0.0139,0.7502],[0.0389,0.8120],[0.0743,0.8338],[0.1142,0.8262],[0.1547,0.8059],[0.1929,0.7816],[0.2296,0.7543],[0.2658,0.7243],[0.3016,0.6923],[0.3373,0.6589],[0.3731,0.6245],[0.4087,0.5896],[0.4441,0.5547],[0.4788,0.5202],[0.5125,0.4866],[0.5448,0.4544],[0.5752,0.4242],[0.6029,0.3965],[0.6270,0.3725],[0.6482,0.3514],[0.6658,0.3340],[0.6801,0.3197],[0.6915,0.3083],[0.7006,0.2993],[0.7079,0.2920],[0.7140,0.2859],[0.7190,0.2809],[0.7230,0.2770],[0.7260,0.2740],[0.7283,0.2717],[0.7300,0.2700],[0.7311,0.2689],[0.7320,0.2680],[0.7327,0.2673],[0.7334,0.2666],[0.7340,0.2660],[0.7344,0.2656],[0.7346,0.2654],[0.7347,0.2653]];
var M=[3.2406,-1.5372,-0.4986,-0.9689,1.8758,0.0415,0.0557,-0.2040,1.0570];
function col(x,y,out,k,oogF){
  if(y<1e-4)y=1e-4;
  var X=x/y,Z=(1-x-y)/y;
  var r=M[0]*X+M[1]+M[2]*Z, g=M[3]*X+M[4]+M[5]*Z, b=M[6]*X+M[7]+M[8]*Z;
  var oog=(r<0||g<0||b<0);
  if(r<0)r=0; if(g<0)g=0; if(b<0)b=0;
  var m=Math.max(r,g,b,1e-6);
  var f=255/m; if(oog) f*=oogF;
  out[k]=r*f; out[k+1]=g*f; out[k+2]=b*f; out[k+3]=255;
}
// u'v'
var OX=1351.6,OY=693.5,SX=1414,SY=1089,CX=1352,CY=41;
var c=document.getElementById('cuv');
if(c&&c.getContext){
  var W=c.width,H=c.height;
  var off=document.createElement('canvas'); off.width=W; off.height=H;
  var oc=off.getContext('2d'); var im=oc.createImageData(W,H); var d=im.data;
  for(var j=0;j<H;j++){
    var v=(OY-(CY+j+0.5))/SY;
    for(var i=0;i<W;i++){
      var u=(CX+i+0.5-OX)/SX;
      var den=6*u-16*v+12;
      col(9*u/den,4*v/den,d,(j*W+i)*4,0.62);
    }
  }
  oc.putImageData(im,0,0);
  var ctx=c.getContext('2d');
  var Pp=[];
  for(var n=0;n<L.length;n++){
    var x=L[n][0],y=L[n][1],dd=-2*x+12*y+3;
    Pp.push([1351.6+4*x/dd*1408.2-CX, 690.5-9*y/dd*1083-CY]);
  }
  ctx.beginPath();
  ctx.moveTo(Pp[0][0],Pp[0][1]);
  for(var n=0;n<Pp.length-1;n++){
    var p0=Pp[Math.max(n-1,0)],p1=Pp[n],p2=Pp[n+1],p3=Pp[Math.min(n+2,Pp.length-1)];
    for(var t=1;t<=8;t++){
      var s=t/8,s2=s*s,s3=s2*s;
      var xx=0.5*((2*p1[0])+(-p0[0]+p2[0])*s+(2*p0[0]-5*p1[0]+4*p2[0]-p3[0])*s2+(-p0[0]+3*p1[0]-3*p2[0]+p3[0])*s3);
      var yy=0.5*((2*p1[1])+(-p0[1]+p2[1])*s+(2*p0[1]-5*p1[1]+4*p2[1]-p3[1])*s2+(-p0[1]+3*p1[1]-3*p2[1]+p3[1])*s3);
      ctx.lineTo(xx,yy);
    }
  }
  ctx.closePath();
  ctx.fillStyle=ctx.createPattern(off,'no-repeat');
  ctx.fill();
}
// xy
var c2=document.getElementById('cxy');
if(c2&&c2.getContext){
  var W2=c2.width,H2=c2.height,ctx2=c2.getContext('2d');
  var im2=ctx2.createImageData(W2,H2),d2=im2.data;
  for(var j=0;j<H2;j++){
    var yy=0.354-(j+0.5)/5200;
    for(var i=0;i<W2;i++){
      var xx=0.2877+(i+0.5)/9000;
      col(xx,yy,d2,(j*W2+i)*4,0.62);
    }
  }
  ctx2.putImageData(im2,0,0);
}
})();

</script>
</body></html>
